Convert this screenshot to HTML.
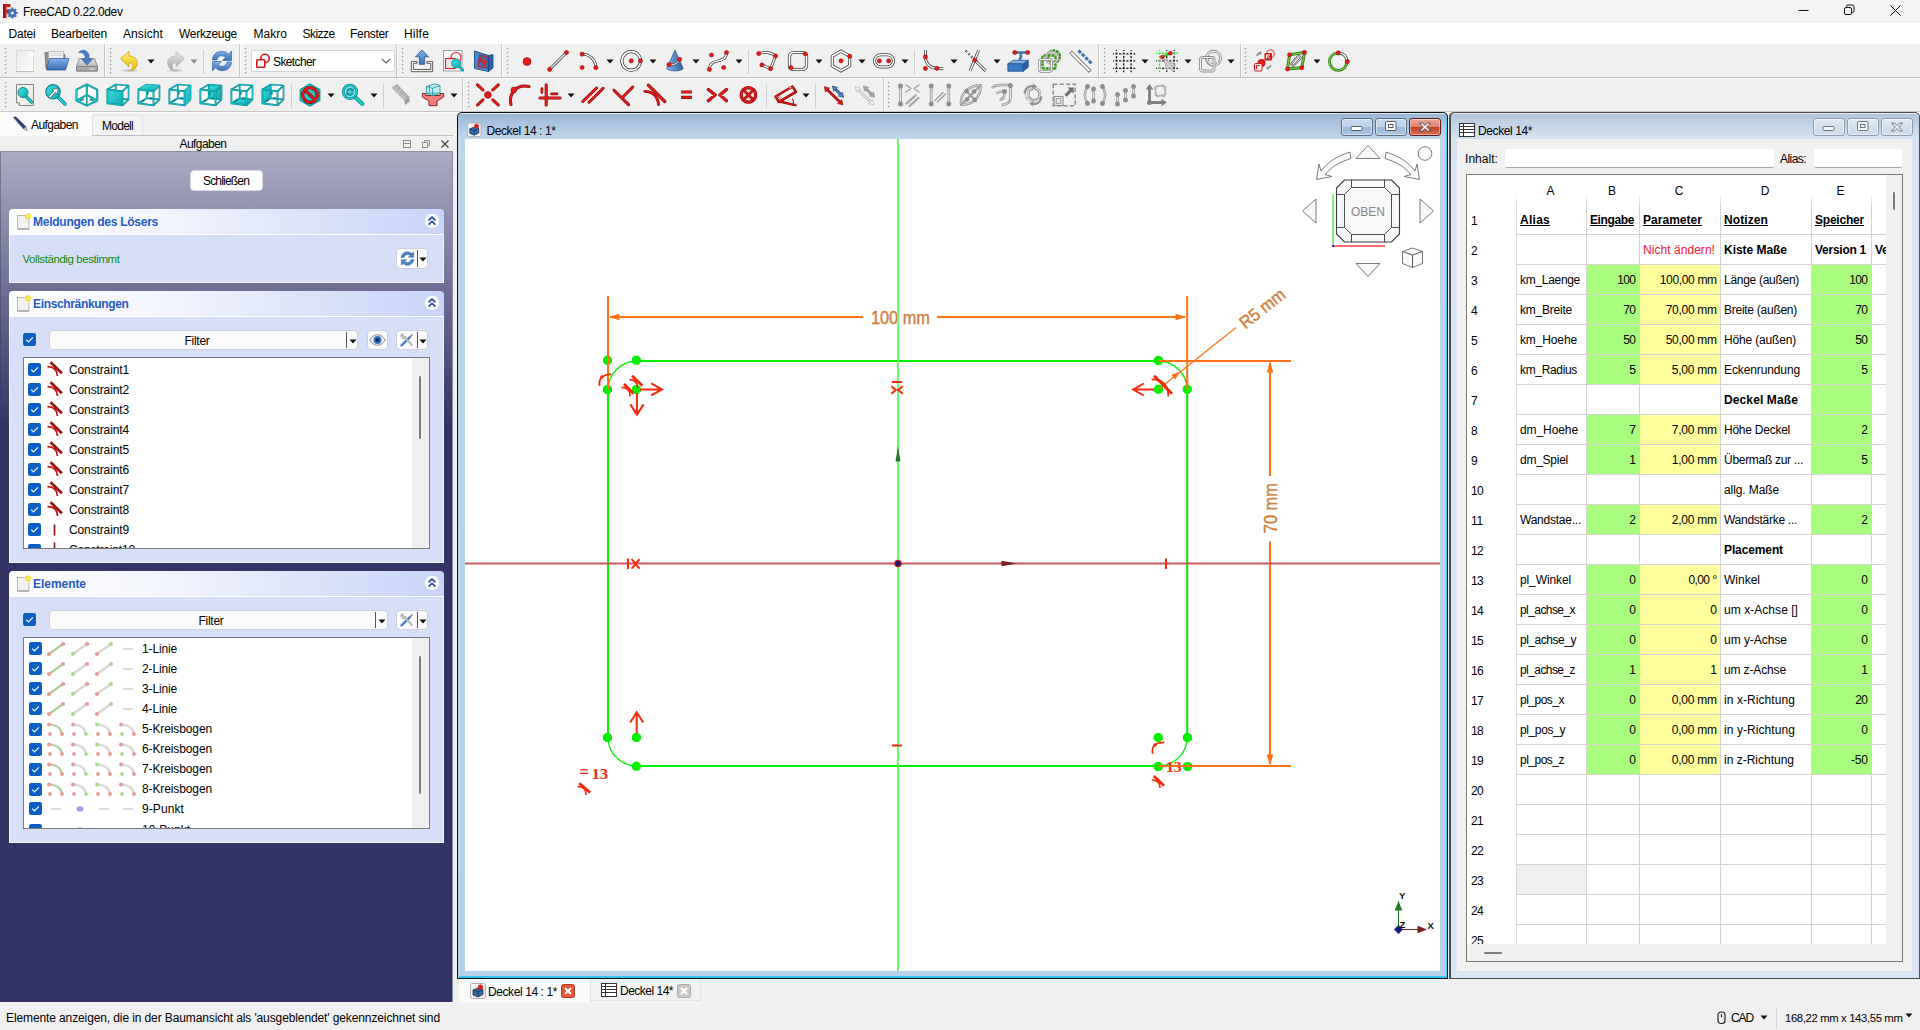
<!DOCTYPE html>
<html lang="de"><head><meta charset="utf-8"><title>FreeCAD 0.22.0dev</title>
<style>
html,body{margin:0;padding:0;}
body{width:1920px;height:1030px;overflow:hidden;position:relative;background:#f0f0f0;font-family:"Liberation Sans",sans-serif;font-size:12px;color:#000;}
div{position:absolute;box-sizing:border-box;}
svg{position:absolute;overflow:visible;}
.t{position:absolute;line-height:16px;height:16px;white-space:pre;}

</style></head>
<body>
<div style="left:0px;top:0px;width:1920px;height:23px;background:#f3f3f3;"></div>
<svg style="left:2px;top:3px" width="16" height="16" viewBox="0 0 16 16">
<path d="M1 1h7.5v3.2H4.6v2.4h3v3h-3V15H1z" fill="#cc1f1f"/>
<path d="M1 1h1.6v14H1z" fill="#8e1010"/>
<g fill="#3f6fb5"><circle cx="10.3" cy="10" r="4"/>
<g stroke="#3f6fb5" stroke-width="2.2" stroke-linecap="butt"><path d="M10.3 4.6v10.8M4.9 10h10.8M6.5 6.2l7.6 7.6M14.1 6.2l-7.6 7.6"/></g></g>
<circle cx="10.3" cy="10" r="1.6" fill="#f3f3f3"/></svg>
<span class="t " style="top:3.5px;font-size:12px;color:#000;letter-spacing:-0.386px;left:23.0px;">FreeCAD 0.22.0dev</span>
<svg style="left:1790px;top:0" width="130" height="23" viewBox="0 0 130 23">
<g stroke="#111" stroke-width="1" fill="none">
<path d="M8.5 10.5h10"/>
<rect x="54.500" y="7.500" width="7" height="7" rx="1.500"/><path d="M56.500 7.500v-1a1.500 1.500 0 0 1 1.500 -1.500h4.500a1.500 1.500 0 0 1 1.500 1.500v4.500a1.500 1.500 0 0 1 -1.500 1.500h-1"/>
<path d="M100.500 5.500l10 10M110.500 5.500l-10 10"/></g></svg>
<div style="left:0px;top:23px;width:1920px;height:21px;background:#fff;"></div>
<span class="t " style="top:25.5px;font-size:12px;color:#000;letter-spacing:-0.203px;left:8.5px;">Datei</span>
<span class="t " style="top:25.5px;font-size:12px;color:#000;letter-spacing:-0.205px;left:51.0px;">Bearbeiten</span>
<span class="t " style="top:25.5px;font-size:12px;color:#000;letter-spacing:0.093px;left:123.0px;">Ansicht</span>
<span class="t " style="top:25.5px;font-size:12px;color:#000;letter-spacing:-0.275px;left:179.0px;">Werkzeuge</span>
<span class="t " style="top:25.5px;font-size:12px;color:#000;letter-spacing:0.032px;left:253.5px;">Makro</span>
<span class="t " style="top:25.5px;font-size:12px;color:#000;letter-spacing:-0.557px;left:302.5px;">Skizze</span>
<span class="t " style="top:25.5px;font-size:12px;color:#000;letter-spacing:-0.312px;left:350.0px;">Fenster</span>
<span class="t " style="top:25.5px;font-size:12px;color:#000;letter-spacing:0.199px;left:404.0px;">Hilfe</span>
<div style="left:0px;top:44px;width:1920px;height:68px;background:#f0f0f0;"></div>
<div style="left:0px;top:77px;width:1920px;height:1px;background:#c0c0c0;"></div>
<div style="left:0px;top:78px;width:1920px;height:1px;background:#fafafa;"></div>
<div style="left:0px;top:111px;width:1920px;height:1px;background:#c6c6c6;"></div>
<div style="left:0px;top:112px;width:1920px;height:1px;background:#fafafa;"></div>
<svg style="left:3.5px;top:47px" width="3" height="28" viewBox="0 0 3 28"><rect x="0" y="0" width="1.400" height="1.400" fill="#ffffff"/><rect x="0.800" y="0.8" width="1.500" height="1.500" fill="#9e9e9e"/><rect x="0" y="4" width="1.400" height="1.400" fill="#ffffff"/><rect x="0.800" y="4.8" width="1.500" height="1.500" fill="#9e9e9e"/><rect x="0" y="8" width="1.400" height="1.400" fill="#ffffff"/><rect x="0.800" y="8.8" width="1.500" height="1.500" fill="#9e9e9e"/><rect x="0" y="12" width="1.400" height="1.400" fill="#ffffff"/><rect x="0.800" y="12.8" width="1.500" height="1.500" fill="#9e9e9e"/><rect x="0" y="16" width="1.400" height="1.400" fill="#ffffff"/><rect x="0.800" y="16.8" width="1.500" height="1.500" fill="#9e9e9e"/><rect x="0" y="20" width="1.400" height="1.400" fill="#ffffff"/><rect x="0.800" y="20.8" width="1.500" height="1.500" fill="#9e9e9e"/><rect x="0" y="24" width="1.400" height="1.400" fill="#ffffff"/><rect x="0.800" y="24.8" width="1.500" height="1.500" fill="#9e9e9e"/></svg>
<svg style="left:108.5px;top:47px" width="3" height="28" viewBox="0 0 3 28"><rect x="0" y="0" width="1.400" height="1.400" fill="#ffffff"/><rect x="0.800" y="0.8" width="1.500" height="1.500" fill="#9e9e9e"/><rect x="0" y="4" width="1.400" height="1.400" fill="#ffffff"/><rect x="0.800" y="4.8" width="1.500" height="1.500" fill="#9e9e9e"/><rect x="0" y="8" width="1.400" height="1.400" fill="#ffffff"/><rect x="0.800" y="8.8" width="1.500" height="1.500" fill="#9e9e9e"/><rect x="0" y="12" width="1.400" height="1.400" fill="#ffffff"/><rect x="0.800" y="12.8" width="1.500" height="1.500" fill="#9e9e9e"/><rect x="0" y="16" width="1.400" height="1.400" fill="#ffffff"/><rect x="0.800" y="16.8" width="1.500" height="1.500" fill="#9e9e9e"/><rect x="0" y="20" width="1.400" height="1.400" fill="#ffffff"/><rect x="0.800" y="20.8" width="1.500" height="1.500" fill="#9e9e9e"/><rect x="0" y="24" width="1.400" height="1.400" fill="#ffffff"/><rect x="0.800" y="24.8" width="1.500" height="1.500" fill="#9e9e9e"/></svg>
<svg style="left:243.5px;top:47px" width="3" height="28" viewBox="0 0 3 28"><rect x="0" y="0" width="1.400" height="1.400" fill="#ffffff"/><rect x="0.800" y="0.8" width="1.500" height="1.500" fill="#9e9e9e"/><rect x="0" y="4" width="1.400" height="1.400" fill="#ffffff"/><rect x="0.800" y="4.8" width="1.500" height="1.500" fill="#9e9e9e"/><rect x="0" y="8" width="1.400" height="1.400" fill="#ffffff"/><rect x="0.800" y="8.8" width="1.500" height="1.500" fill="#9e9e9e"/><rect x="0" y="12" width="1.400" height="1.400" fill="#ffffff"/><rect x="0.800" y="12.8" width="1.500" height="1.500" fill="#9e9e9e"/><rect x="0" y="16" width="1.400" height="1.400" fill="#ffffff"/><rect x="0.800" y="16.8" width="1.500" height="1.500" fill="#9e9e9e"/><rect x="0" y="20" width="1.400" height="1.400" fill="#ffffff"/><rect x="0.800" y="20.8" width="1.500" height="1.500" fill="#9e9e9e"/><rect x="0" y="24" width="1.400" height="1.400" fill="#ffffff"/><rect x="0.800" y="24.8" width="1.500" height="1.500" fill="#9e9e9e"/></svg>
<svg style="left:400.5px;top:47px" width="3" height="28" viewBox="0 0 3 28"><rect x="0" y="0" width="1.400" height="1.400" fill="#ffffff"/><rect x="0.800" y="0.8" width="1.500" height="1.500" fill="#9e9e9e"/><rect x="0" y="4" width="1.400" height="1.400" fill="#ffffff"/><rect x="0.800" y="4.8" width="1.500" height="1.500" fill="#9e9e9e"/><rect x="0" y="8" width="1.400" height="1.400" fill="#ffffff"/><rect x="0.800" y="8.8" width="1.500" height="1.500" fill="#9e9e9e"/><rect x="0" y="12" width="1.400" height="1.400" fill="#ffffff"/><rect x="0.800" y="12.8" width="1.500" height="1.500" fill="#9e9e9e"/><rect x="0" y="16" width="1.400" height="1.400" fill="#ffffff"/><rect x="0.800" y="16.8" width="1.500" height="1.500" fill="#9e9e9e"/><rect x="0" y="20" width="1.400" height="1.400" fill="#ffffff"/><rect x="0.800" y="20.8" width="1.500" height="1.500" fill="#9e9e9e"/><rect x="0" y="24" width="1.400" height="1.400" fill="#ffffff"/><rect x="0.800" y="24.8" width="1.500" height="1.500" fill="#9e9e9e"/></svg>
<svg style="left:505.5px;top:47px" width="3" height="28" viewBox="0 0 3 28"><rect x="0" y="0" width="1.400" height="1.400" fill="#ffffff"/><rect x="0.800" y="0.8" width="1.500" height="1.500" fill="#9e9e9e"/><rect x="0" y="4" width="1.400" height="1.400" fill="#ffffff"/><rect x="0.800" y="4.8" width="1.500" height="1.500" fill="#9e9e9e"/><rect x="0" y="8" width="1.400" height="1.400" fill="#ffffff"/><rect x="0.800" y="8.8" width="1.500" height="1.500" fill="#9e9e9e"/><rect x="0" y="12" width="1.400" height="1.400" fill="#ffffff"/><rect x="0.800" y="12.8" width="1.500" height="1.500" fill="#9e9e9e"/><rect x="0" y="16" width="1.400" height="1.400" fill="#ffffff"/><rect x="0.800" y="16.8" width="1.500" height="1.500" fill="#9e9e9e"/><rect x="0" y="20" width="1.400" height="1.400" fill="#ffffff"/><rect x="0.800" y="20.8" width="1.500" height="1.500" fill="#9e9e9e"/><rect x="0" y="24" width="1.400" height="1.400" fill="#ffffff"/><rect x="0.800" y="24.8" width="1.500" height="1.500" fill="#9e9e9e"/></svg>
<svg style="left:1102.5px;top:47px" width="3" height="28" viewBox="0 0 3 28"><rect x="0" y="0" width="1.400" height="1.400" fill="#ffffff"/><rect x="0.800" y="0.8" width="1.500" height="1.500" fill="#9e9e9e"/><rect x="0" y="4" width="1.400" height="1.400" fill="#ffffff"/><rect x="0.800" y="4.8" width="1.500" height="1.500" fill="#9e9e9e"/><rect x="0" y="8" width="1.400" height="1.400" fill="#ffffff"/><rect x="0.800" y="8.8" width="1.500" height="1.500" fill="#9e9e9e"/><rect x="0" y="12" width="1.400" height="1.400" fill="#ffffff"/><rect x="0.800" y="12.8" width="1.500" height="1.500" fill="#9e9e9e"/><rect x="0" y="16" width="1.400" height="1.400" fill="#ffffff"/><rect x="0.800" y="16.8" width="1.500" height="1.500" fill="#9e9e9e"/><rect x="0" y="20" width="1.400" height="1.400" fill="#ffffff"/><rect x="0.800" y="20.8" width="1.500" height="1.500" fill="#9e9e9e"/><rect x="0" y="24" width="1.400" height="1.400" fill="#ffffff"/><rect x="0.800" y="24.8" width="1.500" height="1.500" fill="#9e9e9e"/></svg>
<svg style="left:1243.5px;top:47px" width="3" height="28" viewBox="0 0 3 28"><rect x="0" y="0" width="1.400" height="1.400" fill="#ffffff"/><rect x="0.800" y="0.8" width="1.500" height="1.500" fill="#9e9e9e"/><rect x="0" y="4" width="1.400" height="1.400" fill="#ffffff"/><rect x="0.800" y="4.8" width="1.500" height="1.500" fill="#9e9e9e"/><rect x="0" y="8" width="1.400" height="1.400" fill="#ffffff"/><rect x="0.800" y="8.8" width="1.500" height="1.500" fill="#9e9e9e"/><rect x="0" y="12" width="1.400" height="1.400" fill="#ffffff"/><rect x="0.800" y="12.8" width="1.500" height="1.500" fill="#9e9e9e"/><rect x="0" y="16" width="1.400" height="1.400" fill="#ffffff"/><rect x="0.800" y="16.8" width="1.500" height="1.500" fill="#9e9e9e"/><rect x="0" y="20" width="1.400" height="1.400" fill="#ffffff"/><rect x="0.800" y="20.8" width="1.500" height="1.500" fill="#9e9e9e"/><rect x="0" y="24" width="1.400" height="1.400" fill="#ffffff"/><rect x="0.800" y="24.8" width="1.500" height="1.500" fill="#9e9e9e"/></svg>
<svg style="left:3.5px;top:81px" width="3" height="28" viewBox="0 0 3 28"><rect x="0" y="0" width="1.400" height="1.400" fill="#ffffff"/><rect x="0.800" y="0.8" width="1.500" height="1.500" fill="#9e9e9e"/><rect x="0" y="4" width="1.400" height="1.400" fill="#ffffff"/><rect x="0.800" y="4.8" width="1.500" height="1.500" fill="#9e9e9e"/><rect x="0" y="8" width="1.400" height="1.400" fill="#ffffff"/><rect x="0.800" y="8.8" width="1.500" height="1.500" fill="#9e9e9e"/><rect x="0" y="12" width="1.400" height="1.400" fill="#ffffff"/><rect x="0.800" y="12.8" width="1.500" height="1.500" fill="#9e9e9e"/><rect x="0" y="16" width="1.400" height="1.400" fill="#ffffff"/><rect x="0.800" y="16.8" width="1.500" height="1.500" fill="#9e9e9e"/><rect x="0" y="20" width="1.400" height="1.400" fill="#ffffff"/><rect x="0.800" y="20.8" width="1.500" height="1.500" fill="#9e9e9e"/><rect x="0" y="24" width="1.400" height="1.400" fill="#ffffff"/><rect x="0.800" y="24.8" width="1.500" height="1.500" fill="#9e9e9e"/></svg>
<svg style="left:466.5px;top:81px" width="3" height="28" viewBox="0 0 3 28"><rect x="0" y="0" width="1.400" height="1.400" fill="#ffffff"/><rect x="0.800" y="0.8" width="1.500" height="1.500" fill="#9e9e9e"/><rect x="0" y="4" width="1.400" height="1.400" fill="#ffffff"/><rect x="0.800" y="4.8" width="1.500" height="1.500" fill="#9e9e9e"/><rect x="0" y="8" width="1.400" height="1.400" fill="#ffffff"/><rect x="0.800" y="8.8" width="1.500" height="1.500" fill="#9e9e9e"/><rect x="0" y="12" width="1.400" height="1.400" fill="#ffffff"/><rect x="0.800" y="12.8" width="1.500" height="1.500" fill="#9e9e9e"/><rect x="0" y="16" width="1.400" height="1.400" fill="#ffffff"/><rect x="0.800" y="16.8" width="1.500" height="1.500" fill="#9e9e9e"/><rect x="0" y="20" width="1.400" height="1.400" fill="#ffffff"/><rect x="0.800" y="20.8" width="1.500" height="1.500" fill="#9e9e9e"/><rect x="0" y="24" width="1.400" height="1.400" fill="#ffffff"/><rect x="0.800" y="24.8" width="1.500" height="1.500" fill="#9e9e9e"/></svg>
<svg style="left:886.5px;top:81px" width="3" height="28" viewBox="0 0 3 28"><rect x="0" y="0" width="1.400" height="1.400" fill="#ffffff"/><rect x="0.800" y="0.8" width="1.500" height="1.500" fill="#9e9e9e"/><rect x="0" y="4" width="1.400" height="1.400" fill="#ffffff"/><rect x="0.800" y="4.8" width="1.500" height="1.500" fill="#9e9e9e"/><rect x="0" y="8" width="1.400" height="1.400" fill="#ffffff"/><rect x="0.800" y="8.8" width="1.500" height="1.500" fill="#9e9e9e"/><rect x="0" y="12" width="1.400" height="1.400" fill="#ffffff"/><rect x="0.800" y="12.8" width="1.500" height="1.500" fill="#9e9e9e"/><rect x="0" y="16" width="1.400" height="1.400" fill="#ffffff"/><rect x="0.800" y="16.8" width="1.500" height="1.500" fill="#9e9e9e"/><rect x="0" y="20" width="1.400" height="1.400" fill="#ffffff"/><rect x="0.800" y="20.8" width="1.500" height="1.500" fill="#9e9e9e"/><rect x="0" y="24" width="1.400" height="1.400" fill="#ffffff"/><rect x="0.800" y="24.8" width="1.500" height="1.500" fill="#9e9e9e"/></svg>
<div style="left:104px;top:44px;width:1px;height:33px;background:#c6c6c6;"></div><div style="left:105px;top:44px;width:1px;height:33px;background:#fbfbfb;"></div>
<div style="left:239px;top:44px;width:1px;height:33px;background:#c6c6c6;"></div><div style="left:240px;top:44px;width:1px;height:33px;background:#fbfbfb;"></div>
<div style="left:396px;top:44px;width:1px;height:33px;background:#c6c6c6;"></div><div style="left:397px;top:44px;width:1px;height:33px;background:#fbfbfb;"></div>
<div style="left:501px;top:44px;width:1px;height:33px;background:#c6c6c6;"></div><div style="left:502px;top:44px;width:1px;height:33px;background:#fbfbfb;"></div>
<div style="left:1098px;top:44px;width:1px;height:33px;background:#c6c6c6;"></div><div style="left:1099px;top:44px;width:1px;height:33px;background:#fbfbfb;"></div>
<div style="left:1240px;top:44px;width:1px;height:33px;background:#c6c6c6;"></div><div style="left:1241px;top:44px;width:1px;height:33px;background:#fbfbfb;"></div>
<div style="left:462px;top:78px;width:1px;height:33px;background:#c6c6c6;"></div><div style="left:463px;top:78px;width:1px;height:33px;background:#fbfbfb;"></div>
<div style="left:883px;top:78px;width:1px;height:33px;background:#c6c6c6;"></div><div style="left:884px;top:78px;width:1px;height:33px;background:#fbfbfb;"></div>
<div style="left:203px;top:50px;width:1px;height:24px;background:#cfcfcf;"></div>
<div style="left:748px;top:50px;width:1px;height:24px;background:#cfcfcf;"></div>
<div style="left:914px;top:50px;width:1px;height:24px;background:#cfcfcf;"></div>
<div style="left:291px;top:84px;width:1px;height:24px;background:#cfcfcf;"></div>
<div style="left:383px;top:84px;width:1px;height:24px;background:#cfcfcf;"></div>
<div style="left:766px;top:84px;width:1px;height:24px;background:#cfcfcf;"></div>
<div style="left:815px;top:84px;width:1px;height:24px;background:#cfcfcf;"></div>
<svg style="left:147px;top:59px" width="8" height="5" viewBox="0 0 8 5"><path d="M0.5 0.5h7L4 4.5z" fill="#111"/></svg>
<svg style="left:606px;top:59px" width="8" height="5" viewBox="0 0 8 5"><path d="M0.5 0.5h7L4 4.5z" fill="#111"/></svg>
<svg style="left:649px;top:59px" width="8" height="5" viewBox="0 0 8 5"><path d="M0.5 0.5h7L4 4.5z" fill="#111"/></svg>
<svg style="left:692px;top:59px" width="8" height="5" viewBox="0 0 8 5"><path d="M0.5 0.5h7L4 4.5z" fill="#111"/></svg>
<svg style="left:735px;top:59px" width="8" height="5" viewBox="0 0 8 5"><path d="M0.5 0.5h7L4 4.5z" fill="#111"/></svg>
<svg style="left:815px;top:59px" width="8" height="5" viewBox="0 0 8 5"><path d="M0.5 0.5h7L4 4.5z" fill="#111"/></svg>
<svg style="left:858px;top:59px" width="8" height="5" viewBox="0 0 8 5"><path d="M0.5 0.5h7L4 4.5z" fill="#111"/></svg>
<svg style="left:901px;top:59px" width="8" height="5" viewBox="0 0 8 5"><path d="M0.5 0.5h7L4 4.5z" fill="#111"/></svg>
<svg style="left:950px;top:59px" width="8" height="5" viewBox="0 0 8 5"><path d="M0.5 0.5h7L4 4.5z" fill="#111"/></svg>
<svg style="left:993px;top:59px" width="8" height="5" viewBox="0 0 8 5"><path d="M0.5 0.5h7L4 4.5z" fill="#111"/></svg>
<svg style="left:1141px;top:59px" width="8" height="5" viewBox="0 0 8 5"><path d="M0.5 0.5h7L4 4.5z" fill="#111"/></svg>
<svg style="left:1184px;top:59px" width="8" height="5" viewBox="0 0 8 5"><path d="M0.5 0.5h7L4 4.5z" fill="#111"/></svg>
<svg style="left:1227px;top:59px" width="8" height="5" viewBox="0 0 8 5"><path d="M0.5 0.5h7L4 4.5z" fill="#111"/></svg>
<svg style="left:1313px;top:59px" width="8" height="5" viewBox="0 0 8 5"><path d="M0.5 0.5h7L4 4.5z" fill="#111"/></svg>
<svg style="left:190px;top:59px" width="8" height="5" viewBox="0 0 8 5"><path d="M0.5 0.5h7L4 4.5z" fill="#8a8a8a"/></svg>
<svg style="left:327px;top:93px" width="8" height="5" viewBox="0 0 8 5"><path d="M0.5 0.5h7L4 4.5z" fill="#111"/></svg>
<svg style="left:370px;top:93px" width="8" height="5" viewBox="0 0 8 5"><path d="M0.5 0.5h7L4 4.5z" fill="#111"/></svg>
<svg style="left:450px;top:93px" width="8" height="5" viewBox="0 0 8 5"><path d="M0.5 0.5h7L4 4.5z" fill="#111"/></svg>
<svg style="left:567px;top:93px" width="8" height="5" viewBox="0 0 8 5"><path d="M0.5 0.5h7L4 4.5z" fill="#111"/></svg>
<svg style="left:802px;top:93px" width="8" height="5" viewBox="0 0 8 5"><path d="M0.5 0.5h7L4 4.5z" fill="#111"/></svg>
<div style="left:251px;top:50px;width:144px;height:22px;background:#fff;border:1px solid #d4d4d4;border-radius:2px;"></div>
<svg style="left:255px;top:53px" width="16" height="16" viewBox="0 0 16 16"><circle cx="10" cy="5.500" r="4.200" fill="none" stroke="#d01818" stroke-width="1.600"/><rect x="1.800" y="6.800" width="8" height="7.400" rx="0.800" fill="#fff" stroke="#d01818" stroke-width="1.600"/></svg>
<span class="t " style="top:53.5px;font-size:12px;color:#000;letter-spacing:-0.607px;left:273.0px;">Sketcher</span>
<svg style="left:381px;top:58px" width="10" height="6" viewBox="0 0 10 6"><path d="M0.800 0.800L5 5l4.200 -4.200" fill="none" stroke="#555" stroke-width="1.100"/></svg>
<div style="left:0px;top:113px;width:93px;height:23px;background:#fbfbfb;"></div>
<div style="left:92px;top:115px;width:51px;height:21px;background:#f3f3f3;border:1px solid #e2e2e2;border-bottom:none;"></div>
<div style="left:92px;top:135px;width:361px;height:1px;background:#bdbdbd;"></div>
<svg style="left:11px;top:116px" width="18" height="16" viewBox="0 0 18 16"><path d="M2.200 1.200L4.800 0.400 15 10.500 12.500 13z" fill="#2c3e66"/><path d="M12.500 13L15 10.500 16.200 14.600z" fill="#c8c8c8" stroke="#555" stroke-width="0.500"/><path d="M2.200 1.200L12.500 13" stroke="#5a78b0" stroke-width="0.800"/></svg>
<span class="t " style="top:117.0px;font-size:12px;color:#000;letter-spacing:-0.548px;left:31.0px;">Aufgaben</span>
<span class="t " style="top:117.5px;font-size:12px;color:#000;letter-spacing:-0.725px;left:102.0px;">Modell</span>
<span class="t " style="top:136.0px;font-size:12px;color:#000;letter-spacing:-0.548px;left:3.0px;width:400px;text-align:center;">Aufgaben</span>
<svg style="left:402px;top:138px" width="50" height="12" viewBox="0 0 50 12"><g fill="none" stroke="#8c8c8c" stroke-width="1"><rect x="1.500" y="2.500" width="7" height="7"/><path d="M1.500 5.500h7"/><rect x="20.500" y="4.500" width="5" height="5"/><path d="M22.500 4.500v-2h5v5h-2"/></g><path d="M39.500 2.500l7 7M46.500 2.500l-7 7" stroke="#444" stroke-width="1.200"/></svg>
<span class="t " style="top:1009.5px;font-size:12px;color:#000;letter-spacing:-0.111px;left:6.0px;">Elemente anzeigen, die in der Baumansicht als &#x27;ausgeblendet&#x27; gekennzeichnet sind</span>
<svg style="left:1717px;top:1011px" width="10" height="14" viewBox="0 0 10 14"><rect x="1" y="1" width="7" height="11.500" rx="3" fill="none" stroke="#222" stroke-width="1.200"/><path d="M4.500 3.200v3" stroke="#222" stroke-width="1.200"/></svg>
<span class="t " style="top:1010.0px;font-size:12px;color:#000;letter-spacing:-1.112px;left:1731.0px;">CAD</span>
<svg style="left:1760px;top:1015px" width="8" height="5" viewBox="0 0 8 5"><path d="M0.5 0.5h7L4 4.5z" fill="#111"/></svg>
<div style="left:1776px;top:1007px;width:1px;height:22px;background:#d6d6d6;"></div>
<span class="t " style="top:1009.5px;font-size:11.3px;color:#000;letter-spacing:-0.357px;left:1785.0px;">168,22 mm x 143,55 mm</span>
<svg style="left:1904.5px;top:1013px" width="8" height="5" viewBox="0 0 8 5"><path d="M0.5 0.5h7L4 4.5z" fill="#111"/></svg>
<div style="left:459px;top:979px;width:132px;height:24px;background:#fafafa;border-right:1px solid #e0e0e0;"></div>
<div style="left:591px;top:979px;width:110px;height:22px;background:#f2f2f2;border-right:1px solid #e2e2e2;border-bottom:1px solid #e2e2e2;"></div>
<svg style="left:470px;top:983px" width="16" height="16" viewBox="0 0 16 16"><rect x="0.500" y="0.500" width="15" height="15" rx="2" fill="#f4f4f4" stroke="#b0b0b0"/><path d="M3 7l5 -2 5 1.500v5l-5 2.500 -5 -2z" fill="#3465a4" stroke="#1d3557" stroke-width="0.800"/><path d="M3 7l5 2 5 -2.500M8 9v5" stroke="#1d3557" stroke-width="0.700" fill="none"/><circle cx="10.500" cy="4" r="2.600" fill="#e02020"/></svg>
<span class="t " style="top:983.5px;font-size:12px;color:#000;letter-spacing:-0.408px;left:488.0px;">Deckel 14 : 1*</span>
<svg style="left:561px;top:984px" width="14" height="14" viewBox="0 0 14 14"><rect x="0.500" y="0.500" width="13" height="13" rx="2" fill="#e8553c" stroke="#b83a26"/><path d="M4 4l6 6M10 4l-6 6" stroke="#fff" stroke-width="2"/></svg>
<svg style="left:601px;top:983px" width="16" height="14" viewBox="0 0 16 14"><rect x="0.500" y="0.500" width="15" height="13" fill="#fff" stroke="#333"/><path d="M0.500 3.5h15" stroke="#333" stroke-width="1"/><path d="M0.500 6.5h15" stroke="#333" stroke-width="1"/><path d="M0.500 9.5h15" stroke="#333" stroke-width="1"/><path d="M4.500 0.500v13" stroke="#333" stroke-width="1"/></svg>
<span class="t " style="top:983.0px;font-size:12px;color:#000;letter-spacing:-0.503px;left:620.0px;">Deckel 14*</span>
<svg style="left:677px;top:984px" width="14" height="14" viewBox="0 0 14 14"><rect x="0.500" y="0.500" width="13" height="13" rx="2" fill="#c9c9c9" stroke="#aaa"/><path d="M4 4l6 6M10 4l-6 6" stroke="#fff" stroke-width="2"/></svg>
<div style="left:0px;top:151px;width:453px;height:851px;background:linear-gradient(180deg,#ababc5 0px,#333366 272px,#333366 100%);border-top:1px solid #8a93a2;border-right:1px solid #8a8aa2;"></div>
<div style="left:0px;top:152px;width:1px;height:850px;background:linear-gradient(180deg,#7c7c94 0px,#333366 272px,#333366 100%);"></div>
<div style="left:453px;top:136px;width:5px;height:866px;background:#f0f0f0;"></div>
<div style="left:190px;top:170px;width:73px;height:21px;background:#fdfdfd;border:1px solid #d9d9e6;border-radius:4px;"></div>
<span class="t " style="top:172.5px;font-size:12px;color:#000;letter-spacing:-0.818px;left:26.0px;width:400px;text-align:center;">Schließen</span>
<div style="left:9px;top:209px;width:435px;height:25px;background:linear-gradient(90deg,#ffffff 0%,#f3f5fd 35%,#c8d4f8 100%);border-radius:4px 4px 0 0;"></div>
<div style="left:9px;top:234px;width:435px;height:49px;background:#d6dff7;border:1px solid #f4f6fd;border-top:1px solid #fff;"></div>
<svg style="left:17px;top:213px" width="15" height="17" viewBox="0 0 15 17"><rect x="0.500" y="2.500" width="11.500" height="13.500" fill="#f2f2f0" stroke="#b9b9b9"/><path d="M0.500 16h11.500" stroke="#8f8f8f"/><circle cx="11" cy="3.300" r="2.600" fill="#ffe94a" stroke="#e6c800" stroke-width="0.600"/></svg>
<span class="t " style="top:213.5px;font-size:12px;color:#2459c9;font-weight:700;letter-spacing:-0.251px;left:33.0px;">Meldungen des Lösers</span>
<svg style="left:423px;top:212px" width="18" height="18" viewBox="0 0 18 18"><circle cx="9" cy="9" r="7.700" fill="#fdfdff" stroke="#c9d2ee" stroke-width="1"/><path d="M5.600 8.400L9 5.100l3.400 3.300M5.600 12.600L9 9.300l3.400 3.300" fill="none" stroke="#1c3f9e" stroke-width="1.500"/></svg>
<div style="left:9px;top:291px;width:435px;height:25px;background:linear-gradient(90deg,#ffffff 0%,#f3f5fd 35%,#c8d4f8 100%);border-radius:4px 4px 0 0;"></div>
<div style="left:9px;top:316px;width:435px;height:247px;background:#d6dff7;border:1px solid #f4f6fd;border-top:1px solid #fff;"></div>
<svg style="left:17px;top:295px" width="15" height="17" viewBox="0 0 15 17"><rect x="0.500" y="2.500" width="11.500" height="13.500" fill="#f2f2f0" stroke="#b9b9b9"/><path d="M0.500 16h11.500" stroke="#8f8f8f"/><circle cx="11" cy="3.300" r="2.600" fill="#ffe94a" stroke="#e6c800" stroke-width="0.600"/></svg>
<span class="t " style="top:295.5px;font-size:12px;color:#2459c9;font-weight:700;letter-spacing:-0.346px;left:33.0px;">Einschränkungen</span>
<svg style="left:423px;top:294px" width="18" height="18" viewBox="0 0 18 18"><circle cx="9" cy="9" r="7.700" fill="#fdfdff" stroke="#c9d2ee" stroke-width="1"/><path d="M5.600 8.400L9 5.100l3.400 3.300M5.600 12.600L9 9.300l3.400 3.300" fill="none" stroke="#1c3f9e" stroke-width="1.500"/></svg>
<div style="left:9px;top:571px;width:435px;height:25px;background:linear-gradient(90deg,#ffffff 0%,#f3f5fd 35%,#c8d4f8 100%);border-radius:4px 4px 0 0;"></div>
<div style="left:9px;top:596px;width:435px;height:247px;background:#d6dff7;border:1px solid #f4f6fd;border-top:1px solid #fff;"></div>
<svg style="left:17px;top:575px" width="15" height="17" viewBox="0 0 15 17"><rect x="0.500" y="2.500" width="11.500" height="13.500" fill="#f2f2f0" stroke="#b9b9b9"/><path d="M0.500 16h11.500" stroke="#8f8f8f"/><circle cx="11" cy="3.300" r="2.600" fill="#ffe94a" stroke="#e6c800" stroke-width="0.600"/></svg>
<span class="t " style="top:575.5px;font-size:12px;color:#2459c9;font-weight:700;letter-spacing:-0.045px;left:33.0px;">Elemente</span>
<svg style="left:423px;top:574px" width="18" height="18" viewBox="0 0 18 18"><circle cx="9" cy="9" r="7.700" fill="#fdfdff" stroke="#c9d2ee" stroke-width="1"/><path d="M5.600 8.400L9 5.100l3.400 3.300M5.600 12.600L9 9.300l3.400 3.300" fill="none" stroke="#1c3f9e" stroke-width="1.500"/></svg>
<span class="t " style="top:251.0px;font-size:11.5px;color:#138a13;letter-spacing:-0.423px;left:22.5px;">Vollständig bestimmt</span>
<div style="left:396px;top:248px;width:32px;height:21px;background:#fcfcfc;border:1px solid #d0d0d8;border-radius:4px;"></div>
<svg style="left:399px;top:250px" width="17" height="17" viewBox="0 0 16 16"><g fill="#4f86c9" stroke="#2c5f9e" stroke-width="0.500"><path d="M2 7a6 6 0 0 1 10.200 -3.600l1.600 -1.600v5h-5l1.700 -1.700a3.600 3.600 0 0 0 -5.900 1.900z"/><path d="M14 9a6 6 0 0 1 -10.200 3.600l-1.600 1.600v-5h5l-1.700 1.700a3.600 3.600 0 0 0 5.900 -1.900z"/></g></svg>
<div style="left:417px;top:250px;width:1px;height:17px;background:#555;"></div>
<svg style="left:419px;top:256.5px" width="8" height="5" viewBox="0 0 8 5"><path d="M0.5 0.5h7L4 4.5z" fill="#111"/></svg>
<svg style="left:23px;top:333px" width="13" height="13" viewBox="0 0 13 13"><rect x="0" y="0" width="13" height="13" rx="2.200" fill="#0a5fc4"/><path d="M3.200 6.700l2.300 2.300 4.400 -4.600" fill="none" stroke="#fff" stroke-width="1.100"/></svg>
<div style="left:49px;top:330px;width:309px;height:20px;background:#fcfcfc;border:1px solid #d0d0d8;border-radius:4px;"></div>
<span class="t " style="top:332.5px;font-size:12px;color:#000;letter-spacing:-0.278px;left:-3.0px;width:400px;text-align:center;">Filter</span>
<div style="left:346px;top:332px;width:1px;height:16px;background:#555;"></div>
<svg style="left:348.5px;top:338.5px" width="8" height="5" viewBox="0 0 8 5"><path d="M0.5 0.5h7L4 4.5z" fill="#111"/></svg>
<div style="left:367px;top:330px;width:21px;height:20px;background:#fcfcfc;border:1px solid #d0d0d8;border-radius:4px;"></div>
<svg style="left:369px;top:333px" width="17" height="14" viewBox="0 0 17 14"><path d="M0.800 7C3 3 6 1.800 8.500 1.800S14 3 16.200 7C14 11 11 12.200 8.500 12.200S3 11 0.800 7z" fill="#e9eef6" stroke="#70788c" stroke-width="0.900"/><circle cx="8.500" cy="7" r="4" fill="#3b74bd"/><circle cx="8.500" cy="7" r="2" fill="#0f2a55"/></svg>
<div style="left:396px;top:330px;width:32px;height:20px;background:#fcfcfc;border:1px solid #d0d0d8;border-radius:4px;"></div>
<svg style="left:399px;top:332px" width="16" height="16" viewBox="0 0 16 16"><path d="M2.500 13.500L11 5" stroke="#3f78c2" stroke-width="2.400" stroke-linecap="round"/><path d="M10.500 5.500l3 -3" stroke="#8e8e8e" stroke-width="1.600"/><path d="M3 3l10 10" stroke="#b9b9b9" stroke-width="2" stroke-linecap="round"/><path d="M1.500 4.500a3 3 0 0 1 3 -3l-1 2 1.500 1.500 2 -1a3 3 0 0 1 -3 3z" fill="#c9c9c9" stroke="#999" stroke-width="0.500"/></svg>
<div style="left:417px;top:332px;width:1px;height:16px;background:#555;"></div>
<svg style="left:419px;top:338.5px" width="8" height="5" viewBox="0 0 8 5"><path d="M0.5 0.5h7L4 4.5z" fill="#111"/></svg>
<svg style="left:23px;top:613px" width="13" height="13" viewBox="0 0 13 13"><rect x="0" y="0" width="13" height="13" rx="2.200" fill="#0a5fc4"/><path d="M3.200 6.700l2.300 2.300 4.400 -4.600" fill="none" stroke="#fff" stroke-width="1.100"/></svg>
<div style="left:49px;top:610px;width:339px;height:20px;background:#fcfcfc;border:1px solid #d0d0d8;border-radius:4px;"></div>
<span class="t " style="top:612.5px;font-size:12px;color:#000;letter-spacing:-0.278px;left:11.0px;width:400px;text-align:center;">Filter</span>
<div style="left:375px;top:612px;width:1px;height:16px;background:#555;"></div>
<svg style="left:377.5px;top:618.5px" width="8" height="5" viewBox="0 0 8 5"><path d="M0.5 0.5h7L4 4.5z" fill="#111"/></svg>
<div style="left:396px;top:610px;width:32px;height:20px;background:#fcfcfc;border:1px solid #d0d0d8;border-radius:4px;"></div>
<svg style="left:399px;top:612px" width="16" height="16" viewBox="0 0 16 16"><path d="M2.500 13.500L11 5" stroke="#3f78c2" stroke-width="2.400" stroke-linecap="round"/><path d="M10.500 5.500l3 -3" stroke="#8e8e8e" stroke-width="1.600"/><path d="M3 3l10 10" stroke="#b9b9b9" stroke-width="2" stroke-linecap="round"/><path d="M1.500 4.500a3 3 0 0 1 3 -3l-1 2 1.500 1.500 2 -1a3 3 0 0 1 -3 3z" fill="#c9c9c9" stroke="#999" stroke-width="0.500"/></svg>
<div style="left:417px;top:612px;width:1px;height:16px;background:#555;"></div>
<svg style="left:419px;top:618.5px" width="8" height="5" viewBox="0 0 8 5"><path d="M0.5 0.5h7L4 4.5z" fill="#111"/></svg>
<div style="left:23px;top:357px;width:407px;height:192px;background:#fff;border:1px solid #7a7a7a;overflow:hidden;"></div>
<div style="left:412px;top:358px;width:17px;height:190px;background:#f0f0f0;"></div>
<div style="left:23px;top:637px;width:407px;height:192px;background:#fff;border:1px solid #7a7a7a;overflow:hidden;"></div>
<div style="left:412px;top:638px;width:17px;height:190px;background:#f0f0f0;"></div>
<div style="left:419px;top:376px;width:2px;height:63px;background:#7f7f7f;border-radius:1px;"></div>
<div style="left:419px;top:656px;width:2px;height:138px;background:#7f7f7f;border-radius:1px;"></div>
<svg style="left:28px;top:363.0px" width="13" height="13" viewBox="0 0 13 13"><rect x="0" y="0" width="13" height="13" rx="2.200" fill="#0a5fc4"/><path d="M3.200 6.700l2.300 2.300 4.400 -4.600" fill="none" stroke="#fff" stroke-width="1.100"/></svg>
<svg style="left:47px;top:361.0px" width="16" height="16" viewBox="0 0 16 16"><path d="M0.500 5.600Q10 5.600 10.500 15" fill="none" stroke="#c81414" stroke-width="1.700"/><path d="M3.600 1.250L14.900 12.200" stroke="#8f0a0a" stroke-width="2.600"/><path d="M3.600 1.250L14.900 12.200" stroke="#e23030" stroke-width="0.800" stroke-dasharray="0.800 0.800"/></svg>
<span class="t " style="top:361.5px;font-size:12px;color:#000;letter-spacing:-0.124px;left:69.0px;">Constraint1</span>
<svg style="left:28px;top:383.0px" width="13" height="13" viewBox="0 0 13 13"><rect x="0" y="0" width="13" height="13" rx="2.200" fill="#0a5fc4"/><path d="M3.200 6.700l2.300 2.300 4.400 -4.600" fill="none" stroke="#fff" stroke-width="1.100"/></svg>
<svg style="left:47px;top:381.0px" width="16" height="16" viewBox="0 0 16 16"><path d="M0.500 5.600Q10 5.600 10.500 15" fill="none" stroke="#c81414" stroke-width="1.700"/><path d="M3.600 1.250L14.900 12.200" stroke="#8f0a0a" stroke-width="2.600"/><path d="M3.600 1.250L14.900 12.200" stroke="#e23030" stroke-width="0.800" stroke-dasharray="0.800 0.800"/></svg>
<span class="t " style="top:381.5px;font-size:12px;color:#000;letter-spacing:-0.124px;left:69.0px;">Constraint2</span>
<svg style="left:28px;top:403.0px" width="13" height="13" viewBox="0 0 13 13"><rect x="0" y="0" width="13" height="13" rx="2.200" fill="#0a5fc4"/><path d="M3.200 6.700l2.300 2.300 4.400 -4.600" fill="none" stroke="#fff" stroke-width="1.100"/></svg>
<svg style="left:47px;top:401.0px" width="16" height="16" viewBox="0 0 16 16"><path d="M0.500 5.600Q10 5.600 10.500 15" fill="none" stroke="#c81414" stroke-width="1.700"/><path d="M3.600 1.250L14.900 12.200" stroke="#8f0a0a" stroke-width="2.600"/><path d="M3.600 1.250L14.900 12.200" stroke="#e23030" stroke-width="0.800" stroke-dasharray="0.800 0.800"/></svg>
<span class="t " style="top:401.5px;font-size:12px;color:#000;letter-spacing:-0.124px;left:69.0px;">Constraint3</span>
<svg style="left:28px;top:423.0px" width="13" height="13" viewBox="0 0 13 13"><rect x="0" y="0" width="13" height="13" rx="2.200" fill="#0a5fc4"/><path d="M3.200 6.700l2.300 2.300 4.400 -4.600" fill="none" stroke="#fff" stroke-width="1.100"/></svg>
<svg style="left:47px;top:421.0px" width="16" height="16" viewBox="0 0 16 16"><path d="M0.500 5.600Q10 5.600 10.500 15" fill="none" stroke="#c81414" stroke-width="1.700"/><path d="M3.600 1.250L14.900 12.200" stroke="#8f0a0a" stroke-width="2.600"/><path d="M3.600 1.250L14.900 12.200" stroke="#e23030" stroke-width="0.800" stroke-dasharray="0.800 0.800"/></svg>
<span class="t " style="top:421.5px;font-size:12px;color:#000;letter-spacing:-0.124px;left:69.0px;">Constraint4</span>
<svg style="left:28px;top:443.0px" width="13" height="13" viewBox="0 0 13 13"><rect x="0" y="0" width="13" height="13" rx="2.200" fill="#0a5fc4"/><path d="M3.200 6.700l2.300 2.300 4.400 -4.600" fill="none" stroke="#fff" stroke-width="1.100"/></svg>
<svg style="left:47px;top:441.0px" width="16" height="16" viewBox="0 0 16 16"><path d="M0.500 5.600Q10 5.600 10.500 15" fill="none" stroke="#c81414" stroke-width="1.700"/><path d="M3.600 1.250L14.900 12.200" stroke="#8f0a0a" stroke-width="2.600"/><path d="M3.600 1.250L14.900 12.200" stroke="#e23030" stroke-width="0.800" stroke-dasharray="0.800 0.800"/></svg>
<span class="t " style="top:441.5px;font-size:12px;color:#000;letter-spacing:-0.124px;left:69.0px;">Constraint5</span>
<svg style="left:28px;top:463.0px" width="13" height="13" viewBox="0 0 13 13"><rect x="0" y="0" width="13" height="13" rx="2.200" fill="#0a5fc4"/><path d="M3.200 6.700l2.300 2.300 4.400 -4.600" fill="none" stroke="#fff" stroke-width="1.100"/></svg>
<svg style="left:47px;top:461.0px" width="16" height="16" viewBox="0 0 16 16"><path d="M0.500 5.600Q10 5.600 10.500 15" fill="none" stroke="#c81414" stroke-width="1.700"/><path d="M3.600 1.250L14.900 12.200" stroke="#8f0a0a" stroke-width="2.600"/><path d="M3.600 1.250L14.900 12.200" stroke="#e23030" stroke-width="0.800" stroke-dasharray="0.800 0.800"/></svg>
<span class="t " style="top:461.5px;font-size:12px;color:#000;letter-spacing:-0.124px;left:69.0px;">Constraint6</span>
<svg style="left:28px;top:483.0px" width="13" height="13" viewBox="0 0 13 13"><rect x="0" y="0" width="13" height="13" rx="2.200" fill="#0a5fc4"/><path d="M3.200 6.700l2.300 2.300 4.400 -4.600" fill="none" stroke="#fff" stroke-width="1.100"/></svg>
<svg style="left:47px;top:481.0px" width="16" height="16" viewBox="0 0 16 16"><path d="M0.500 5.600Q10 5.600 10.500 15" fill="none" stroke="#c81414" stroke-width="1.700"/><path d="M3.600 1.250L14.900 12.200" stroke="#8f0a0a" stroke-width="2.600"/><path d="M3.600 1.250L14.900 12.200" stroke="#e23030" stroke-width="0.800" stroke-dasharray="0.800 0.800"/></svg>
<span class="t " style="top:481.5px;font-size:12px;color:#000;letter-spacing:-0.124px;left:69.0px;">Constraint7</span>
<svg style="left:28px;top:503.0px" width="13" height="13" viewBox="0 0 13 13"><rect x="0" y="0" width="13" height="13" rx="2.200" fill="#0a5fc4"/><path d="M3.200 6.700l2.300 2.300 4.400 -4.600" fill="none" stroke="#fff" stroke-width="1.100"/></svg>
<svg style="left:47px;top:501.0px" width="16" height="16" viewBox="0 0 16 16"><path d="M0.500 5.600Q10 5.600 10.500 15" fill="none" stroke="#c81414" stroke-width="1.700"/><path d="M3.600 1.250L14.900 12.200" stroke="#8f0a0a" stroke-width="2.600"/><path d="M3.600 1.250L14.900 12.200" stroke="#e23030" stroke-width="0.800" stroke-dasharray="0.800 0.800"/></svg>
<span class="t " style="top:501.5px;font-size:12px;color:#000;letter-spacing:-0.124px;left:69.0px;">Constraint8</span>
<svg style="left:28px;top:523.0px" width="13" height="13" viewBox="0 0 13 13"><rect x="0" y="0" width="13" height="13" rx="2.200" fill="#0a5fc4"/><path d="M3.200 6.700l2.300 2.300 4.400 -4.600" fill="none" stroke="#fff" stroke-width="1.100"/></svg>
<svg style="left:47px;top:521.5px" width="16" height="16" viewBox="0 0 16 16"><path d="M7.500 2.500v11" stroke="#8f0a0a" stroke-width="1.600"/></svg>
<span class="t " style="top:521.5px;font-size:12px;color:#000;letter-spacing:-0.124px;left:69.0px;">Constraint9</span>
<div style="left:24px;top:539px;width:388px;height:9px;overflow:hidden;"><svg style="left:4px;top:4.5px" width="13" height="13" viewBox="0 0 13 13"><rect x="0" y="0" width="13" height="13" rx="2.200" fill="#0a5fc4"/><path d="M3.200 6.700l2.300 2.300 4.400 -4.600" fill="none" stroke="#fff" stroke-width="1.100"/></svg><svg style="left:23px;top:0.5px" width="16" height="16" viewBox="0 0 16 16"><path d="M7.500 2.500v11" stroke="#8f0a0a" stroke-width="1.600"/></svg><span class="t " style="top:3.0px;font-size:12px;color:#000;letter-spacing:-0.170px;left:45.0px;">Constraint10</span></div>
<svg style="left:29px;top:642.0px" width="13" height="13" viewBox="0 0 13 13"><rect x="0" y="0" width="13" height="13" rx="2.200" fill="#0a5fc4"/><path d="M3.200 6.700l2.300 2.300 4.400 -4.600" fill="none" stroke="#fff" stroke-width="1.100"/></svg>
<svg style="left:46px;top:640.5px" width="20" height="16" viewBox="0 0 20 16"><path d="M3 13L17 3" stroke="#cfcfcf" stroke-width="2.600"/><path d="M3 13L17 3" stroke="#9ad27a" stroke-width="1.200"/><circle cx="3" cy="13" r="2.100" fill="#e79a9a"/><circle cx="17" cy="3" r="2.100" fill="#e79a9a"/></svg>
<svg style="left:70px;top:640.5px" width="20" height="16" viewBox="0 0 20 16"><path d="M3 13L17 3" stroke="#cfcfcf" stroke-width="2.600"/><path d="M3 13L17 3" stroke="#e0e0e0" stroke-width="1.200"/><circle cx="3" cy="13" r="2.100" fill="#a6dc8c"/><circle cx="17" cy="3" r="2.100" fill="#e79a9a"/></svg>
<svg style="left:94px;top:640.5px" width="20" height="16" viewBox="0 0 20 16"><path d="M3 13L17 3" stroke="#cfcfcf" stroke-width="2.600"/><path d="M3 13L17 3" stroke="#e0e0e0" stroke-width="1.200"/><circle cx="3" cy="13" r="2.100" fill="#e79a9a"/><circle cx="17" cy="3" r="2.100" fill="#a6dc8c"/></svg>
<svg style="left:118px;top:640.5px" width="20" height="16" viewBox="0 0 20 16"><path d="M5 8h10" stroke="#c8c8c8" stroke-width="1.200"/></svg>
<span class="t " style="top:640.5px;font-size:12px;color:#000;letter-spacing:-0.146px;left:142.0px;">1-Linie</span>
<svg style="left:29px;top:662.0px" width="13" height="13" viewBox="0 0 13 13"><rect x="0" y="0" width="13" height="13" rx="2.200" fill="#0a5fc4"/><path d="M3.200 6.700l2.300 2.300 4.400 -4.600" fill="none" stroke="#fff" stroke-width="1.100"/></svg>
<svg style="left:46px;top:660.5px" width="20" height="16" viewBox="0 0 20 16"><path d="M3 13L17 3" stroke="#cfcfcf" stroke-width="2.600"/><path d="M3 13L17 3" stroke="#9ad27a" stroke-width="1.200"/><circle cx="3" cy="13" r="2.100" fill="#e79a9a"/><circle cx="17" cy="3" r="2.100" fill="#e79a9a"/></svg>
<svg style="left:70px;top:660.5px" width="20" height="16" viewBox="0 0 20 16"><path d="M3 13L17 3" stroke="#cfcfcf" stroke-width="2.600"/><path d="M3 13L17 3" stroke="#e0e0e0" stroke-width="1.200"/><circle cx="3" cy="13" r="2.100" fill="#a6dc8c"/><circle cx="17" cy="3" r="2.100" fill="#e79a9a"/></svg>
<svg style="left:94px;top:660.5px" width="20" height="16" viewBox="0 0 20 16"><path d="M3 13L17 3" stroke="#cfcfcf" stroke-width="2.600"/><path d="M3 13L17 3" stroke="#e0e0e0" stroke-width="1.200"/><circle cx="3" cy="13" r="2.100" fill="#e79a9a"/><circle cx="17" cy="3" r="2.100" fill="#a6dc8c"/></svg>
<svg style="left:118px;top:660.5px" width="20" height="16" viewBox="0 0 20 16"><path d="M5 8h10" stroke="#c8c8c8" stroke-width="1.200"/></svg>
<span class="t " style="top:660.5px;font-size:12px;color:#000;letter-spacing:-0.146px;left:142.0px;">2-Linie</span>
<svg style="left:29px;top:682.0px" width="13" height="13" viewBox="0 0 13 13"><rect x="0" y="0" width="13" height="13" rx="2.200" fill="#0a5fc4"/><path d="M3.200 6.700l2.300 2.300 4.400 -4.600" fill="none" stroke="#fff" stroke-width="1.100"/></svg>
<svg style="left:46px;top:680.5px" width="20" height="16" viewBox="0 0 20 16"><path d="M3 13L17 3" stroke="#cfcfcf" stroke-width="2.600"/><path d="M3 13L17 3" stroke="#9ad27a" stroke-width="1.200"/><circle cx="3" cy="13" r="2.100" fill="#e79a9a"/><circle cx="17" cy="3" r="2.100" fill="#e79a9a"/></svg>
<svg style="left:70px;top:680.5px" width="20" height="16" viewBox="0 0 20 16"><path d="M3 13L17 3" stroke="#cfcfcf" stroke-width="2.600"/><path d="M3 13L17 3" stroke="#e0e0e0" stroke-width="1.200"/><circle cx="3" cy="13" r="2.100" fill="#a6dc8c"/><circle cx="17" cy="3" r="2.100" fill="#e79a9a"/></svg>
<svg style="left:94px;top:680.5px" width="20" height="16" viewBox="0 0 20 16"><path d="M3 13L17 3" stroke="#cfcfcf" stroke-width="2.600"/><path d="M3 13L17 3" stroke="#e0e0e0" stroke-width="1.200"/><circle cx="3" cy="13" r="2.100" fill="#e79a9a"/><circle cx="17" cy="3" r="2.100" fill="#a6dc8c"/></svg>
<svg style="left:118px;top:680.5px" width="20" height="16" viewBox="0 0 20 16"><path d="M5 8h10" stroke="#c8c8c8" stroke-width="1.200"/></svg>
<span class="t " style="top:680.5px;font-size:12px;color:#000;letter-spacing:-0.146px;left:142.0px;">3-Linie</span>
<svg style="left:29px;top:702.0px" width="13" height="13" viewBox="0 0 13 13"><rect x="0" y="0" width="13" height="13" rx="2.200" fill="#0a5fc4"/><path d="M3.200 6.700l2.300 2.300 4.400 -4.600" fill="none" stroke="#fff" stroke-width="1.100"/></svg>
<svg style="left:46px;top:700.5px" width="20" height="16" viewBox="0 0 20 16"><path d="M3 13L17 3" stroke="#cfcfcf" stroke-width="2.600"/><path d="M3 13L17 3" stroke="#9ad27a" stroke-width="1.200"/><circle cx="3" cy="13" r="2.100" fill="#e79a9a"/><circle cx="17" cy="3" r="2.100" fill="#e79a9a"/></svg>
<svg style="left:70px;top:700.5px" width="20" height="16" viewBox="0 0 20 16"><path d="M3 13L17 3" stroke="#cfcfcf" stroke-width="2.600"/><path d="M3 13L17 3" stroke="#e0e0e0" stroke-width="1.200"/><circle cx="3" cy="13" r="2.100" fill="#a6dc8c"/><circle cx="17" cy="3" r="2.100" fill="#e79a9a"/></svg>
<svg style="left:94px;top:700.5px" width="20" height="16" viewBox="0 0 20 16"><path d="M3 13L17 3" stroke="#cfcfcf" stroke-width="2.600"/><path d="M3 13L17 3" stroke="#e0e0e0" stroke-width="1.200"/><circle cx="3" cy="13" r="2.100" fill="#e79a9a"/><circle cx="17" cy="3" r="2.100" fill="#a6dc8c"/></svg>
<svg style="left:118px;top:700.5px" width="20" height="16" viewBox="0 0 20 16"><path d="M5 8h10" stroke="#c8c8c8" stroke-width="1.200"/></svg>
<span class="t " style="top:700.5px;font-size:12px;color:#000;letter-spacing:-0.146px;left:142.0px;">4-Linie</span>
<svg style="left:29px;top:722.5px" width="13" height="13" viewBox="0 0 13 13"><rect x="0" y="0" width="13" height="13" rx="2.200" fill="#0a5fc4"/><path d="M3.200 6.700l2.300 2.300 4.400 -4.600" fill="none" stroke="#fff" stroke-width="1.100"/></svg>
<svg style="left:46px;top:721.0px" width="20" height="16" viewBox="0 0 20 16"><path d="M3 3.500C10 3.500 15 7 16 13" fill="none" stroke="#d4d4d4" stroke-width="2.600"/><path d="M3 3.500C10 3.500 15 7 16 13" fill="none" stroke="#9ad27a" stroke-width="1.200"/><circle cx="3" cy="3.500" r="1.900" fill="#e79a9a"/><circle cx="16" cy="13" r="1.900" fill="#e79a9a"/><circle cx="4" cy="13" r="1.900" fill="#e79a9a"/></svg>
<svg style="left:70px;top:721.0px" width="20" height="16" viewBox="0 0 20 16"><path d="M3 3.500C10 3.500 15 7 16 13" fill="none" stroke="#d4d4d4" stroke-width="2.600"/><path d="M3 3.500C10 3.500 15 7 16 13" fill="none" stroke="#e0e0e0" stroke-width="1.200"/><circle cx="3" cy="3.500" r="1.900" fill="#e79a9a"/><circle cx="16" cy="13" r="1.900" fill="#a6dc8c"/><circle cx="4" cy="13" r="1.900" fill="#e79a9a"/></svg>
<svg style="left:94px;top:721.0px" width="20" height="16" viewBox="0 0 20 16"><path d="M3 3.500C10 3.500 15 7 16 13" fill="none" stroke="#d4d4d4" stroke-width="2.600"/><path d="M3 3.500C10 3.500 15 7 16 13" fill="none" stroke="#e0e0e0" stroke-width="1.200"/><circle cx="3" cy="3.500" r="1.900" fill="#a6dc8c"/><circle cx="16" cy="13" r="1.900" fill="#e79a9a"/><circle cx="4" cy="13" r="1.900" fill="#e79a9a"/></svg>
<svg style="left:118px;top:721.0px" width="20" height="16" viewBox="0 0 20 16"><path d="M3 3.500C10 3.500 15 7 16 13" fill="none" stroke="#d4d4d4" stroke-width="2.600"/><path d="M3 3.500C10 3.500 15 7 16 13" fill="none" stroke="#e0e0e0" stroke-width="1.200"/><circle cx="3" cy="3.500" r="1.900" fill="#e79a9a"/><circle cx="16" cy="13" r="1.900" fill="#e79a9a"/><circle cx="4" cy="13" r="1.900" fill="#a6dc8c"/></svg>
<span class="t " style="top:721.0px;font-size:12px;color:#000;letter-spacing:-0.115px;left:142.0px;">5-Kreisbogen</span>
<svg style="left:29px;top:742.5px" width="13" height="13" viewBox="0 0 13 13"><rect x="0" y="0" width="13" height="13" rx="2.200" fill="#0a5fc4"/><path d="M3.200 6.700l2.300 2.300 4.400 -4.600" fill="none" stroke="#fff" stroke-width="1.100"/></svg>
<svg style="left:46px;top:741.0px" width="20" height="16" viewBox="0 0 20 16"><path d="M3 3.500C10 3.500 15 7 16 13" fill="none" stroke="#d4d4d4" stroke-width="2.600"/><path d="M3 3.500C10 3.500 15 7 16 13" fill="none" stroke="#9ad27a" stroke-width="1.200"/><circle cx="3" cy="3.500" r="1.900" fill="#e79a9a"/><circle cx="16" cy="13" r="1.900" fill="#e79a9a"/><circle cx="4" cy="13" r="1.900" fill="#e79a9a"/></svg>
<svg style="left:70px;top:741.0px" width="20" height="16" viewBox="0 0 20 16"><path d="M3 3.500C10 3.500 15 7 16 13" fill="none" stroke="#d4d4d4" stroke-width="2.600"/><path d="M3 3.500C10 3.500 15 7 16 13" fill="none" stroke="#e0e0e0" stroke-width="1.200"/><circle cx="3" cy="3.500" r="1.900" fill="#e79a9a"/><circle cx="16" cy="13" r="1.900" fill="#a6dc8c"/><circle cx="4" cy="13" r="1.900" fill="#e79a9a"/></svg>
<svg style="left:94px;top:741.0px" width="20" height="16" viewBox="0 0 20 16"><path d="M3 3.500C10 3.500 15 7 16 13" fill="none" stroke="#d4d4d4" stroke-width="2.600"/><path d="M3 3.500C10 3.500 15 7 16 13" fill="none" stroke="#e0e0e0" stroke-width="1.200"/><circle cx="3" cy="3.500" r="1.900" fill="#a6dc8c"/><circle cx="16" cy="13" r="1.900" fill="#e79a9a"/><circle cx="4" cy="13" r="1.900" fill="#e79a9a"/></svg>
<svg style="left:118px;top:741.0px" width="20" height="16" viewBox="0 0 20 16"><path d="M3 3.500C10 3.500 15 7 16 13" fill="none" stroke="#d4d4d4" stroke-width="2.600"/><path d="M3 3.500C10 3.500 15 7 16 13" fill="none" stroke="#e0e0e0" stroke-width="1.200"/><circle cx="3" cy="3.500" r="1.900" fill="#e79a9a"/><circle cx="16" cy="13" r="1.900" fill="#e79a9a"/><circle cx="4" cy="13" r="1.900" fill="#a6dc8c"/></svg>
<span class="t " style="top:741.0px;font-size:12px;color:#000;letter-spacing:-0.115px;left:142.0px;">6-Kreisbogen</span>
<svg style="left:29px;top:762.5px" width="13" height="13" viewBox="0 0 13 13"><rect x="0" y="0" width="13" height="13" rx="2.200" fill="#0a5fc4"/><path d="M3.200 6.700l2.300 2.300 4.400 -4.600" fill="none" stroke="#fff" stroke-width="1.100"/></svg>
<svg style="left:46px;top:761.0px" width="20" height="16" viewBox="0 0 20 16"><path d="M3 3.500C10 3.500 15 7 16 13" fill="none" stroke="#d4d4d4" stroke-width="2.600"/><path d="M3 3.500C10 3.500 15 7 16 13" fill="none" stroke="#9ad27a" stroke-width="1.200"/><circle cx="3" cy="3.500" r="1.900" fill="#e79a9a"/><circle cx="16" cy="13" r="1.900" fill="#e79a9a"/><circle cx="4" cy="13" r="1.900" fill="#e79a9a"/></svg>
<svg style="left:70px;top:761.0px" width="20" height="16" viewBox="0 0 20 16"><path d="M3 3.500C10 3.500 15 7 16 13" fill="none" stroke="#d4d4d4" stroke-width="2.600"/><path d="M3 3.500C10 3.500 15 7 16 13" fill="none" stroke="#e0e0e0" stroke-width="1.200"/><circle cx="3" cy="3.500" r="1.900" fill="#e79a9a"/><circle cx="16" cy="13" r="1.900" fill="#a6dc8c"/><circle cx="4" cy="13" r="1.900" fill="#e79a9a"/></svg>
<svg style="left:94px;top:761.0px" width="20" height="16" viewBox="0 0 20 16"><path d="M3 3.500C10 3.500 15 7 16 13" fill="none" stroke="#d4d4d4" stroke-width="2.600"/><path d="M3 3.500C10 3.500 15 7 16 13" fill="none" stroke="#e0e0e0" stroke-width="1.200"/><circle cx="3" cy="3.500" r="1.900" fill="#a6dc8c"/><circle cx="16" cy="13" r="1.900" fill="#e79a9a"/><circle cx="4" cy="13" r="1.900" fill="#e79a9a"/></svg>
<svg style="left:118px;top:761.0px" width="20" height="16" viewBox="0 0 20 16"><path d="M3 3.500C10 3.500 15 7 16 13" fill="none" stroke="#d4d4d4" stroke-width="2.600"/><path d="M3 3.500C10 3.500 15 7 16 13" fill="none" stroke="#e0e0e0" stroke-width="1.200"/><circle cx="3" cy="3.500" r="1.900" fill="#e79a9a"/><circle cx="16" cy="13" r="1.900" fill="#e79a9a"/><circle cx="4" cy="13" r="1.900" fill="#a6dc8c"/></svg>
<span class="t " style="top:761.0px;font-size:12px;color:#000;letter-spacing:-0.115px;left:142.0px;">7-Kreisbogen</span>
<svg style="left:29px;top:782.5px" width="13" height="13" viewBox="0 0 13 13"><rect x="0" y="0" width="13" height="13" rx="2.200" fill="#0a5fc4"/><path d="M3.200 6.700l2.300 2.300 4.400 -4.600" fill="none" stroke="#fff" stroke-width="1.100"/></svg>
<svg style="left:46px;top:781.0px" width="20" height="16" viewBox="0 0 20 16"><path d="M3 3.500C10 3.500 15 7 16 13" fill="none" stroke="#d4d4d4" stroke-width="2.600"/><path d="M3 3.500C10 3.500 15 7 16 13" fill="none" stroke="#9ad27a" stroke-width="1.200"/><circle cx="3" cy="3.500" r="1.900" fill="#e79a9a"/><circle cx="16" cy="13" r="1.900" fill="#e79a9a"/><circle cx="4" cy="13" r="1.900" fill="#e79a9a"/></svg>
<svg style="left:70px;top:781.0px" width="20" height="16" viewBox="0 0 20 16"><path d="M3 3.500C10 3.500 15 7 16 13" fill="none" stroke="#d4d4d4" stroke-width="2.600"/><path d="M3 3.500C10 3.500 15 7 16 13" fill="none" stroke="#e0e0e0" stroke-width="1.200"/><circle cx="3" cy="3.500" r="1.900" fill="#e79a9a"/><circle cx="16" cy="13" r="1.900" fill="#a6dc8c"/><circle cx="4" cy="13" r="1.900" fill="#e79a9a"/></svg>
<svg style="left:94px;top:781.0px" width="20" height="16" viewBox="0 0 20 16"><path d="M3 3.500C10 3.500 15 7 16 13" fill="none" stroke="#d4d4d4" stroke-width="2.600"/><path d="M3 3.500C10 3.500 15 7 16 13" fill="none" stroke="#e0e0e0" stroke-width="1.200"/><circle cx="3" cy="3.500" r="1.900" fill="#a6dc8c"/><circle cx="16" cy="13" r="1.900" fill="#e79a9a"/><circle cx="4" cy="13" r="1.900" fill="#e79a9a"/></svg>
<svg style="left:118px;top:781.0px" width="20" height="16" viewBox="0 0 20 16"><path d="M3 3.500C10 3.500 15 7 16 13" fill="none" stroke="#d4d4d4" stroke-width="2.600"/><path d="M3 3.500C10 3.500 15 7 16 13" fill="none" stroke="#e0e0e0" stroke-width="1.200"/><circle cx="3" cy="3.500" r="1.900" fill="#e79a9a"/><circle cx="16" cy="13" r="1.900" fill="#e79a9a"/><circle cx="4" cy="13" r="1.900" fill="#a6dc8c"/></svg>
<span class="t " style="top:781.0px;font-size:12px;color:#000;letter-spacing:-0.115px;left:142.0px;">8-Kreisbogen</span>
<svg style="left:29px;top:802.0px" width="13" height="13" viewBox="0 0 13 13"><rect x="0" y="0" width="13" height="13" rx="2.200" fill="#0a5fc4"/><path d="M3.200 6.700l2.300 2.300 4.400 -4.600" fill="none" stroke="#fff" stroke-width="1.100"/></svg>
<svg style="left:46px;top:800.5px" width="20" height="16" viewBox="0 0 20 16"><path d="M5 8h10" stroke="#c8c8c8" stroke-width="1.200"/></svg>
<svg style="left:70px;top:800.5px" width="20" height="16" viewBox="0 0 20 16"><ellipse cx="10" cy="8" rx="3.600" ry="2.800" fill="#a9a3ee"/></svg>
<svg style="left:94px;top:800.5px" width="20" height="16" viewBox="0 0 20 16"><path d="M5 8h10" stroke="#c8c8c8" stroke-width="1.200"/></svg>
<svg style="left:118px;top:800.5px" width="20" height="16" viewBox="0 0 20 16"><path d="M5 8h10" stroke="#c8c8c8" stroke-width="1.200"/></svg>
<span class="t " style="top:800.5px;font-size:12px;color:#000;letter-spacing:0.092px;left:142.0px;">9-Punkt</span>
<div style="left:24px;top:819px;width:388px;height:9px;overflow:hidden;"><svg style="left:5px;top:4.5px" width="13" height="13" viewBox="0 0 13 13"><rect x="0" y="0" width="13" height="13" rx="2.200" fill="#0a5fc4"/><path d="M3.200 6.700l2.300 2.300 4.400 -4.600" fill="none" stroke="#fff" stroke-width="1.100"/></svg><svg style="left:46px;top:3px" width="20" height="16" viewBox="0 0 20 16"><ellipse cx="10" cy="8" rx="3.600" ry="2.800" fill="#a9a3ee"/></svg><span class="t " style="top:3.0px;font-size:12px;color:#000;left:118.0px;">10-Punkt</span></div>
<div style="left:457px;top:112px;width:991px;height:867px;background:#111;border-radius:5px 5px 0 0;"></div>
<div style="left:458px;top:113px;width:989px;height:865px;background:linear-gradient(180deg,#fdfeff 0px,#9bb7d6 1.500px,#a9c2de 9px,#c3d7ed 26px,#bdd3ec 60px,#b9d1ea 100%);border-radius:4px 4px 0 0;"></div>
<div style="left:459px;top:976px;width:988px;height:2px;background:#35c6f4;"></div>
<div style="left:1446px;top:118px;width:1px;height:859px;background:#35c6f4;"></div>
<div style="left:465px;top:139px;width:975px;height:832px;background:#fff;"></div>
<svg style="left:467px;top:122px" width="14.500" height="15.500" viewBox="0 0 16 16"><rect x="0.500" y="0.500" width="15" height="15" rx="2" fill="#f4f4f4" stroke="#b0b0b0"/><path d="M3 7l5 -2 5 1.500v5l-5 2.500 -5 -2z" fill="#3465a4" stroke="#1d3557" stroke-width="0.800"/><path d="M3 7l5 2 5 -2.500M8 9v5" stroke="#1d3557" stroke-width="0.700" fill="none"/><circle cx="10.500" cy="4" r="2.600" fill="#e02020"/></svg>
<span class="t " style="top:122.8px;font-size:12px;color:#000;letter-spacing:-0.408px;left:486.5px;">Deckel 14 : 1*</span>
<div style="left:1341px;top:118px;width:32px;height:18px;background:linear-gradient(180deg,#c9daef 0%,#bdd1ea 47%,#9ebada 53%,#adc6e2 100%);border:1px solid #5a6d86;border-radius:3px;box-shadow:inset 0 0 0 1px rgba(255,255,255,0.45);"></div><svg style="left:1350px;top:126px" width="14" height="6" viewBox="0 0 14 6"><rect x="1" y="0.500" width="11" height="4" rx="1" fill="#fff" stroke="#454f5c" stroke-width="0.900"/></svg>
<div style="left:1375px;top:118px;width:32px;height:18px;background:linear-gradient(180deg,#c9daef 0%,#bdd1ea 47%,#9ebada 53%,#adc6e2 100%);border:1px solid #5a6d86;border-radius:3px;box-shadow:inset 0 0 0 1px rgba(255,255,255,0.45);"></div><svg style="left:1385px;top:121px" width="12" height="11" viewBox="0 0 12 11"><rect x="0.500" y="0.500" width="10.500" height="9" rx="1" fill="#fff" stroke="#454f5c" stroke-width="0.900"/><rect x="3.500" y="3.500" width="4.500" height="3" fill="none" stroke="#454f5c" stroke-width="0.900"/></svg>
<div style="left:1409px;top:118px;width:32px;height:18px;background:linear-gradient(180deg,#eaa898 0%,#dd8472 47%,#c13f29 53%,#d9705a 100%);border:1px solid #5c1a22;border-radius:3px;box-shadow:inset 0 0 0 1px rgba(255,255,255,0.45);"></div><svg style="left:1418px;top:121px" width="14" height="12" viewBox="0 0 14 12"><path d="M1.500 2h3L7 4.500 9.500 2h3L8.700 6 12.500 10h-3L7 7.500 4.500 10h-3L5.300 6z" fill="#fff" stroke="#454f5c" stroke-width="0.900" stroke-linejoin="round"/></svg>
<svg style="left:0;top:0" width="1920" height="1030" viewBox="0 0 1920 1030"><g stroke="#ff7215" stroke-width="2" fill="none"><path d="M863 317H610M937 317H1185"/><path d="M1270 363V476M1270 541.500V764"/></g><g fill="#ff7215"><path d="M608.500 317l11 -3.300v6.600z"/><path d="M1186.500 317l-11 -3.300v6.600z"/><path d="M1270 361.500l-3.300 11h6.600z"/><path d="M1270 765.500l-3.300 -11h6.600z"/></g><g fill="none" stroke="#00f000" stroke-width="2"><path d="M636.500 361H1158.500M1187.2 389.500V737.500M1158.500 766.1H636.500M608 737.500V389.500"/></g><g fill="none" stroke="#00f000" stroke-width="1.300"><path d="M608 390A29 29 0 0 1 637 361"/><path d="M1158.200 361A29 29 0 0 1 1187.2 390"/><path d="M1187.2 737.200A29 29 0 0 1 1158.200 766.1"/><path d="M637 766.1A29 29 0 0 1 608 737.200"/></g><path d="M898 139V971" stroke="#66ff66" stroke-width="2"/><path d="M465 563.500H1440" stroke="#c8595c" stroke-width="1.800"/><g stroke="#ff7215" stroke-width="2" fill="none"><path d="M608 296V389"/><path d="M1187.2 296V389"/><path d="M1158.500 361H1291M1158.500 766.1H1291"/><path d="M1158.500 389.300L1236 327.500" stroke-width="1.200"/></g><path d="M1180.500 371.600L1175.300 379.600L1171.400 374.800z" fill="#ff7215"/><text x="1166" y="771.800" font-family="Liberation Serif,serif" font-weight="700" font-size="14.500" fill="#f42a0c" textLength="15.600" lengthAdjust="spacingAndGlyphs">13</text><path d="M1158.500 766.1H1291" stroke="#ff7215" stroke-width="2"/><g fill="#00f000"><path d="M605.6 355.8h3.800l2.600 2.600v3.800l-2.600 2.600h-3.800l-2.600 -2.600v-3.800z"/><path d="M634.5 355.8h3.800l2.600 2.600v3.800l-2.600 2.600h-3.800l-2.600 -2.600v-3.800z"/><path d="M605.6 384.9h3.800l2.600 2.600v3.800l-2.600 2.600h-3.800l-2.600 -2.600v-3.800z"/><path d="M634.5 384.9h3.800l2.600 2.600v3.800l-2.600 2.600h-3.800l-2.600 -2.600v-3.800z"/><path d="M1156.6 355.9h3.800l2.600 2.600v3.800l-2.600 2.600h-3.800l-2.600 -2.600v-3.800z"/><path d="M1185.4 384.8h3.800l2.600 2.600v3.800l-2.600 2.600h-3.800l-2.600 -2.600v-3.800z"/><path d="M1156.6 384.8h3.800l2.600 2.600v3.800l-2.600 2.600h-3.800l-2.600 -2.600v-3.800z"/><path d="M605.6 732.9h3.800l2.600 2.600v3.800l-2.600 2.600h-3.800l-2.600 -2.600v-3.800z"/><path d="M634.5 732.9h3.800l2.600 2.600v3.800l-2.600 2.600h-3.800l-2.600 -2.600v-3.800z"/><path d="M634.5 761.8h3.800l2.600 2.600v3.800l-2.600 2.600h-3.800l-2.600 -2.600v-3.800z"/><path d="M1156.4 732.9h3.800l2.600 2.600v3.800l-2.600 2.600h-3.800l-2.600 -2.600v-3.800z"/><path d="M1185.6 732.9h3.800l2.600 2.600v3.800l-2.600 2.600h-3.800l-2.600 -2.600v-3.800z"/><path d="M1156.4 762.0h3.800l2.600 2.600v3.800l-2.600 2.600h-3.800l-2.600 -2.600v-3.800z"/><path d="M1185.6 762.0h3.800l2.600 2.600v3.800l-2.600 2.600h-3.800l-2.600 -2.600v-3.800z"/></g><path d="M608 350V389.400" stroke="#ff7215" stroke-width="2"/><path d="M1187.2 380V389.300" stroke="#ff7215" stroke-width="2"/><path d="M1158.500 361H1170" stroke="#ff7215" stroke-width="2"/><path d="M1158.300 766.1H1195" stroke="#ff7215" stroke-width="2"/><path d="M1158.500 389.300L1166 383.300" stroke="#ff7215" stroke-width="1.200"/><circle cx="898" cy="563.500" r="3.800" fill="#e02020"/><circle cx="898" cy="563.500" r="2.700" fill="#1b1b6e"/><path d="M898 446l-2.500 15.500h5z" fill="#1f7a1f"/><path d="M1017 563.500l-15.500 -2.700v5.400z" fill="#7a1f1f"/><g stroke="#f42a0c" stroke-width="2" fill="none" stroke-linecap="butt"><path d="M640 389.400H661M651.200 383.300l10.800 6.100 -10.800 6"/><path d="M636.900 393V414M630.400 404.400l6.500 10.200 6.800 -10.200"/><path d="M632.1 375.8L642.3 385.7" stroke-width="2.800" stroke-linecap="butt"/><path d="M629.4 379.6Q637.6 379.6 637.6 388" stroke-width="1.700"/><path d="M624 384L633.5 393.5" stroke-width="2.800" stroke-linecap="butt"/><path d="M621.6 387.4Q630.1 387.4 630.1 396.2" stroke-width="1.700"/><path d="M599.700 386C598.500 381 600 375 611 374.200" stroke-width="1.800"/><circle cx="601.900" cy="376.900" r="1.700" fill="#f42a0c" stroke="none"/><path d="M1154 389.600H1134M1143.800 383.500l-10.600 6.100 10.600 5.900"/><path d="M1154 375.7L1172 393.7" stroke-width="2.800" stroke-linecap="butt"/><path d="M1151.6 379.4Q1168.3 379.4 1168.3 396.4" stroke-width="1.700"/><path d="M636.700 733V712.500M630.200 722.500l6.500 -10.200 6.600 10.200"/><path d="M891.800 382H902.100"/><path d="M891.300 386.300l4.500 3.800 -4.500 3.700M902.700 386.300l-4.500 3.800 4.500 3.700"/><path d="M628 558.400V569"/><path d="M631.600 559.200l4 4.500 4 -4.500M631.600 568.600l4 -4.500 4 4.500"/><path d="M1166 558.400V569"/><path d="M892 745.500H902"/><path d="M1152.800 753.800C1151.500 748 1153 742.500 1164.500 742.400" stroke-width="1.800"/><circle cx="1155.100" cy="744.900" r="1.700" fill="#f42a0c" stroke="none"/><path d="M1153.8 775.9L1164 785.7" stroke-width="2.800" stroke-linecap="butt"/><path d="M1151.8 780Q1160 780 1160 788.1" stroke-width="1.700"/><path d="M579.2 783.2L590.2 792.6" stroke-width="2.800" stroke-linecap="butt"/><path d="M577.5 786.5Q586.1 786.5 586.1 795" stroke-width="1.700"/><path d="M580 769.900h8.200M580 773.400h8.200" stroke-width="1.400"/></g><text x="591.400" y="778.900" font-family="Liberation Serif,serif" font-weight="700" font-size="14.500" fill="#f42a0c" textLength="16.800" lengthAdjust="spacingAndGlyphs">13</text><text x="900.400" y="323.900" text-anchor="middle" font-family="Liberation Sans,sans-serif" font-size="17.500" fill="#d08040" stroke="#d08040" stroke-width="0.450" textLength="59" lengthAdjust="spacingAndGlyphs">100 mm</text><path d="M898 300V335" stroke="#66ff66" stroke-width="2"/><text transform="translate(1277.200 508.200) rotate(-90)" text-anchor="middle" font-family="Liberation Sans,sans-serif" font-size="17.500" fill="#d08040" stroke="#d08040" stroke-width="0.450" textLength="50" lengthAdjust="spacingAndGlyphs">70 mm</text><text transform="translate(1266 313.200) rotate(-38.200)" text-anchor="middle" font-family="Liberation Sans,sans-serif" font-size="17.500" fill="#d08040" stroke="#d08040" stroke-width="0.450" textLength="53" lengthAdjust="spacingAndGlyphs">R5 mm</text><g fill="#f8f9fb" stroke="#6a6a6a" stroke-width="0.900"><path d="M1368 145.500l12 13h-24z"/><path d="M1368 276.500l12 -13h-24z"/><path d="M1302.500 211l13.500 -12v24z"/><path d="M1433.500 211l-13.500 -12v24z"/><circle cx="1425" cy="153.500" r="6.800"/><path d="M1350 152c-13 4 -22 10 -29 19l-2 -7 -2.500 15.500 15.500 -3 -7 -2c6 -7 13 -12 26 -16z"/><path d="M1386 152c13 4 22 10 29 19l2 -7 2.500 15.500 -15.500 -3 7 -2c-6 -7 -13 -12 -26 -16z"/><path d="M1412.500 248l10 3.500v12l-10 4 -10 -4v-12z"/><path d="M1402.500 251.500l10 3.500 10 -3.500M1412.500 255v12.500" fill="none" stroke="#444"/></g><g fill="#f8f9fb" stroke="#3c3c3c" stroke-width="1.100"><path d="M1344.500 180h47l8 8v46l-8 8h-47l-8 -8v-46z"/><path d="M1351.500 187.500h33l7 7v33l-7 7h-33l-7 -7v-33z" stroke-width="0.900"/><path d="M1351.500 179.500v8M1384.500 179.500v8M1351.500 234.500v8M1384.500 234.500v8M1336 194.500h8.500M1336 227.500h8.500M1391.500 194.500h8.500M1391.500 227.500h8.500" stroke-width="0.900"/></g><text x="1368" y="215.500" text-anchor="middle" font-family="Liberation Sans,sans-serif" font-size="12.500" fill="#858585" textLength="34" lengthAdjust="spacingAndGlyphs">OBEN</text><path d="M1333 194V245" stroke="#55f055" stroke-width="1.500"/><path d="M1334 246H1385" stroke="#ff6a6a" stroke-width="1.800"/><rect x="1332" y="245" width="2" height="2" fill="#22f"/><path d="M1398.500 901v25" stroke="#1f7a1f" stroke-width="1"/><path d="M1398.500 901l3.800 9.500h-7.600z" fill="#1f7a1f"/><path d="M1400 929.500h26" stroke="#7a1f1f" stroke-width="1"/><path d="M1427 929.500l-9.500 -3.800v7.600z" fill="#7a1f1f"/><path d="M1398.500 925l4.500 4.500 -4.500 4.500 -4.500 -4.500z" fill="#1c1c80"/><text x="1399" y="899" font-family="Liberation Sans,sans-serif" font-size="9.500" font-weight="700" fill="#111">Y</text><text x="1427.5" y="928.5" font-family="Liberation Sans,sans-serif" font-size="9.500" font-weight="700" fill="#111">X</text><text x="1399.5" y="928" font-family="Liberation Sans,sans-serif" font-size="9.500" font-weight="700" fill="#111">Z</text></svg>
<div style="left:1449px;top:112px;width:471px;height:867px;background:#4e4e4e;border-radius:5px 5px 0 0;"></div>
<div style="left:1451px;top:113px;width:468px;height:865px;background:linear-gradient(180deg,#fdfeff 0px,#b5c7dc 1.500px,#c0d0e3 9px,#d6e2f0 26px,#d9e5f3 60px,#dbe6f4 100%);border-radius:4px 4px 0 0;"></div>
<div style="left:1457px;top:139px;width:455px;height:832px;background:#f0f0f0;"></div>
<svg style="left:1459px;top:123px" width="16" height="14" viewBox="0 0 16 14"><rect x="0.500" y="0.500" width="15" height="13" fill="#fff" stroke="#333"/><path d="M0.500 3.5h15" stroke="#333" stroke-width="1"/><path d="M0.500 6.5h15" stroke="#333" stroke-width="1"/><path d="M0.500 9.5h15" stroke="#333" stroke-width="1"/><path d="M4.500 0.500v13" stroke="#333" stroke-width="1"/></svg>
<span class="t " style="top:122.5px;font-size:12px;color:#000;letter-spacing:-0.403px;left:1478.0px;">Deckel 14*</span>
<div style="left:1813px;top:118px;width:32px;height:18px;background:linear-gradient(180deg,#e3ebf5 0%,#d5e0ee 50%,#cfdbeb 100%);border:1px solid #8c9bb0;border-radius:3px;box-shadow:inset 0 0 0 1px rgba(255,255,255,0.45);"></div><svg style="left:1822px;top:126px" width="14" height="6" viewBox="0 0 14 6"><rect x="1" y="0.500" width="11" height="4" rx="1" fill="#f4f6fa" stroke="#5f6975" stroke-width="0.900"/></svg>
<div style="left:1847px;top:118px;width:32px;height:18px;background:linear-gradient(180deg,#e3ebf5 0%,#d5e0ee 50%,#cfdbeb 100%);border:1px solid #8c9bb0;border-radius:3px;box-shadow:inset 0 0 0 1px rgba(255,255,255,0.45);"></div><svg style="left:1857px;top:121px" width="12" height="11" viewBox="0 0 12 11"><rect x="0.500" y="0.500" width="10.500" height="9" rx="1" fill="#f4f6fa" stroke="#5f6975" stroke-width="0.900"/><rect x="3.500" y="3.500" width="4.500" height="3" fill="none" stroke="#5f6975" stroke-width="0.900"/></svg>
<div style="left:1881px;top:118px;width:32px;height:18px;background:linear-gradient(180deg,#e3ebf5 0%,#d5e0ee 50%,#cfdbeb 100%);border:1px solid #8c9bb0;border-radius:3px;box-shadow:inset 0 0 0 1px rgba(255,255,255,0.45);"></div><svg style="left:1890px;top:121px" width="14" height="12" viewBox="0 0 14 12"><path d="M1.500 2h3L7 4.500 9.500 2h3L8.700 6 12.500 10h-3L7 7.500 4.500 10h-3L5.300 6z" fill="#f4f6fa" stroke="#5f6975" stroke-width="0.900" stroke-linejoin="round"/></svg>
<span class="t " style="top:150.5px;font-size:12px;color:#000;letter-spacing:0.044px;left:1465.0px;">Inhalt:</span>
<span class="t " style="top:150.5px;font-size:12px;color:#000;letter-spacing:-0.557px;left:1780.0px;">Alias:</span>
<div style="left:1505px;top:149px;width:269px;height:19px;background:#fff;border-bottom:1px solid #a8a8a8;border-radius:2px;"></div>
<div style="left:1814px;top:149px;width:88px;height:19px;background:#fff;border-bottom:1px solid #a8a8a8;border-radius:2px;"></div>
<div style="left:1466px;top:174px;width:437px;height:788px;background:#f0f0f0;border:1px solid #7a7a7a;"></div>
<div style="left:1467px;top:175px;width:419px;height:769px;background:#fff;"></div>
<div style="left:1586px;top:175px;width:1px;height:769px;background:#d4d4d4;"></div>
<span class="t " style="top:182.5px;font-size:12px;color:#000;left:1350.5px;width:400px;text-align:center;">A</span>
<div style="left:1639px;top:175px;width:1px;height:769px;background:#d4d4d4;"></div>
<span class="t " style="top:182.5px;font-size:12px;color:#000;left:1412.0px;width:400px;text-align:center;">B</span>
<div style="left:1720px;top:175px;width:1px;height:769px;background:#d4d4d4;"></div>
<span class="t " style="top:182.5px;font-size:12px;color:#000;left:1479.0px;width:400px;text-align:center;">C</span>
<div style="left:1811px;top:175px;width:1px;height:769px;background:#d4d4d4;"></div>
<span class="t " style="top:182.5px;font-size:12px;color:#000;left:1565.0px;width:400px;text-align:center;">D</span>
<div style="left:1871px;top:175px;width:1px;height:769px;background:#d4d4d4;"></div>
<span class="t " style="top:182.5px;font-size:12px;color:#000;left:1640.5px;width:400px;text-align:center;">E</span>
<div style="left:1886px;top:175px;width:1px;height:769px;background:#d4d4d4;"></div>
<div style="left:1516px;top:175px;width:1px;height:769px;background:#dcdcdc;"></div>
<div style="left:1516px;top:175px;width:370px;height:31px;background:linear-gradient(180deg,#fff 60%,rgba(255,255,255,0) 100%);"></div>
<span class="t " style="top:182.5px;font-size:12px;color:#000;left:1350.5px;width:400px;text-align:center;">A</span>
<span class="t " style="top:182.5px;font-size:12px;color:#000;left:1412.0px;width:400px;text-align:center;">B</span>
<span class="t " style="top:182.5px;font-size:12px;color:#000;left:1479.0px;width:400px;text-align:center;">C</span>
<span class="t " style="top:182.5px;font-size:12px;color:#000;left:1565.0px;width:400px;text-align:center;">D</span>
<span class="t " style="top:182.5px;font-size:12px;color:#000;left:1640.5px;width:400px;text-align:center;">E</span>
<span class="t " style="top:212.5px;font-size:12px;color:#000;letter-spacing:-0.674px;left:1471.0px;">1</span>
<span class="t " style="top:211.5px;font-size:12px;color:#000;font-weight:700;letter-spacing:0.264px;text-decoration:underline;left:1520.0px;">Alias</span>
<span class="t " style="top:211.5px;font-size:12px;color:#000;font-weight:700;letter-spacing:-0.382px;text-decoration:underline;left:1590.0px;">Eingabe</span>
<span class="t " style="top:211.5px;font-size:12px;color:#000;font-weight:700;letter-spacing:0.033px;text-decoration:underline;left:1643.0px;">Parameter</span>
<span class="t " style="top:211.5px;font-size:12px;color:#000;font-weight:700;letter-spacing:0.096px;text-decoration:underline;left:1724.0px;">Notizen</span>
<span class="t " style="top:211.5px;font-size:12px;color:#000;font-weight:700;letter-spacing:-0.211px;text-decoration:underline;left:1815.0px;">Speicher</span>
<div style="left:1517px;top:234px;width:369px;height:1px;background:#d4d4d4;"></div>
<span class="t " style="top:242.5px;font-size:12px;color:#000;letter-spacing:-0.674px;left:1471.0px;">2</span>
<span class="t " style="top:241.5px;font-size:12px;color:#f0142d;letter-spacing:0.048px;left:1643.0px;">Nicht ändern!</span>
<span class="t " style="top:241.5px;font-size:12px;color:#000;font-weight:700;letter-spacing:-0.035px;left:1724.0px;">Kiste Maße</span>
<span class="t " style="top:241.5px;font-size:12px;color:#000;font-weight:700;letter-spacing:-0.262px;left:1815.0px;">Version 1</span>
<div style="left:1871px;top:235px;width:15px;height:29px;overflow:hidden;"><span class="t " style="top:6.5px;font-size:12px;color:#000;font-weight:700;letter-spacing:-0.262px;left:4.0px;">Version 2</span></div>
<div style="left:1517px;top:264px;width:369px;height:1px;background:#d4d4d4;"></div>
<span class="t " style="top:272.5px;font-size:12px;color:#000;letter-spacing:-0.674px;left:1471.0px;">3</span>
<span class="t " style="top:271.5px;font-size:12px;color:#000;letter-spacing:-0.302px;left:1520.0px;">km_Laenge</span>
<div style="left:1587px;top:265px;width:52px;height:29px;background:#a8fd7e;"></div>
<span class="t " style="top:271.5px;font-size:12px;color:#000;letter-spacing:-0.674px;right:284.7px;">100</span>
<div style="left:1640px;top:265px;width:80px;height:29px;background:#ffff9e;"></div>
<span class="t " style="top:271.5px;font-size:12px;color:#000;letter-spacing:-0.337px;right:203.3px;">100,00 mm</span>
<span class="t " style="top:271.5px;font-size:12px;color:#000;letter-spacing:-0.286px;left:1724.0px;">Länge (außen)</span>
<div style="left:1812px;top:265px;width:59px;height:29px;background:#a8fd7e;"></div>
<span class="t " style="top:271.5px;font-size:12px;color:#000;letter-spacing:-0.674px;right:52.7px;">100</span>
<div style="left:1517px;top:294px;width:369px;height:1px;background:#d4d4d4;"></div>
<span class="t " style="top:302.5px;font-size:12px;color:#000;letter-spacing:-0.674px;left:1471.0px;">4</span>
<span class="t " style="top:301.5px;font-size:12px;color:#000;letter-spacing:-0.224px;left:1520.0px;">km_Breite</span>
<div style="left:1587px;top:295px;width:52px;height:29px;background:#a8fd7e;"></div>
<span class="t " style="top:301.5px;font-size:12px;color:#000;letter-spacing:-0.674px;right:284.7px;">70</span>
<div style="left:1640px;top:295px;width:80px;height:29px;background:#ffff9e;"></div>
<span class="t " style="top:301.5px;font-size:12px;color:#000;letter-spacing:-0.295px;right:203.3px;">70,00 mm</span>
<span class="t " style="top:301.5px;font-size:12px;color:#000;letter-spacing:-0.264px;left:1724.0px;">Breite (außen)</span>
<div style="left:1812px;top:295px;width:59px;height:29px;background:#a8fd7e;"></div>
<span class="t " style="top:301.5px;font-size:12px;color:#000;letter-spacing:-0.674px;right:52.7px;">70</span>
<div style="left:1517px;top:324px;width:369px;height:1px;background:#d4d4d4;"></div>
<span class="t " style="top:332.5px;font-size:12px;color:#000;letter-spacing:-0.674px;left:1471.0px;">5</span>
<span class="t " style="top:331.5px;font-size:12px;color:#000;letter-spacing:-0.129px;left:1520.0px;">km_Hoehe</span>
<div style="left:1587px;top:325px;width:52px;height:29px;background:#a8fd7e;"></div>
<span class="t " style="top:331.5px;font-size:12px;color:#000;letter-spacing:-0.674px;right:284.7px;">50</span>
<div style="left:1640px;top:325px;width:80px;height:29px;background:#ffff9e;"></div>
<span class="t " style="top:331.5px;font-size:12px;color:#000;letter-spacing:-0.295px;right:203.3px;">50,00 mm</span>
<span class="t " style="top:331.5px;font-size:12px;color:#000;letter-spacing:-0.170px;left:1724.0px;">Höhe (außen)</span>
<div style="left:1812px;top:325px;width:59px;height:29px;background:#a8fd7e;"></div>
<span class="t " style="top:331.5px;font-size:12px;color:#000;letter-spacing:-0.674px;right:52.7px;">50</span>
<div style="left:1517px;top:354px;width:369px;height:1px;background:#d4d4d4;"></div>
<span class="t " style="top:362.5px;font-size:12px;color:#000;letter-spacing:-0.674px;left:1471.0px;">6</span>
<span class="t " style="top:361.5px;font-size:12px;color:#000;letter-spacing:-0.336px;left:1520.0px;">km_Radius</span>
<div style="left:1587px;top:355px;width:52px;height:29px;background:#a8fd7e;"></div>
<span class="t " style="top:361.5px;font-size:12px;color:#000;letter-spacing:-0.674px;right:284.7px;">5</span>
<div style="left:1640px;top:355px;width:80px;height:29px;background:#ffff9e;"></div>
<span class="t " style="top:361.5px;font-size:12px;color:#000;letter-spacing:-0.240px;right:203.2px;">5,00 mm</span>
<span class="t " style="top:361.5px;font-size:12px;color:#000;letter-spacing:-0.116px;left:1724.0px;">Eckenrundung</span>
<div style="left:1812px;top:355px;width:59px;height:29px;background:#a8fd7e;"></div>
<span class="t " style="top:361.5px;font-size:12px;color:#000;letter-spacing:-0.674px;right:52.7px;">5</span>
<div style="left:1517px;top:384px;width:369px;height:1px;background:#d4d4d4;"></div>
<span class="t " style="top:392.5px;font-size:12px;color:#000;letter-spacing:-0.674px;left:1471.0px;">7</span>
<span class="t " style="top:391.5px;font-size:12px;color:#000;font-weight:700;letter-spacing:0.118px;left:1724.0px;">Deckel Maße</span>
<div style="left:1812px;top:385px;width:59px;height:29px;background:#a8fd7e;"></div>
<div style="left:1517px;top:414px;width:369px;height:1px;background:#d4d4d4;"></div>
<span class="t " style="top:422.5px;font-size:12px;color:#000;letter-spacing:-0.674px;left:1471.0px;">8</span>
<span class="t " style="top:421.5px;font-size:12px;color:#000;letter-spacing:-0.088px;left:1520.0px;">dm_Hoehe</span>
<div style="left:1587px;top:415px;width:52px;height:29px;background:#a8fd7e;"></div>
<span class="t " style="top:421.5px;font-size:12px;color:#000;letter-spacing:-0.674px;right:284.7px;">7</span>
<div style="left:1640px;top:415px;width:80px;height:29px;background:#ffff9e;"></div>
<span class="t " style="top:421.5px;font-size:12px;color:#000;letter-spacing:-0.240px;right:203.2px;">7,00 mm</span>
<span class="t " style="top:421.5px;font-size:12px;color:#000;letter-spacing:-0.246px;left:1724.0px;">Höhe Deckel</span>
<div style="left:1812px;top:415px;width:59px;height:29px;background:#a8fd7e;"></div>
<span class="t " style="top:421.5px;font-size:12px;color:#000;letter-spacing:-0.674px;right:52.7px;">2</span>
<div style="left:1517px;top:444px;width:369px;height:1px;background:#d4d4d4;"></div>
<span class="t " style="top:452.5px;font-size:12px;color:#000;letter-spacing:-0.674px;left:1471.0px;">9</span>
<span class="t " style="top:451.5px;font-size:12px;color:#000;letter-spacing:-0.254px;left:1520.0px;">dm_Spiel</span>
<div style="left:1587px;top:445px;width:52px;height:29px;background:#a8fd7e;"></div>
<span class="t " style="top:451.5px;font-size:12px;color:#000;letter-spacing:-0.674px;right:284.7px;">1</span>
<div style="left:1640px;top:445px;width:80px;height:29px;background:#ffff9e;"></div>
<span class="t " style="top:451.5px;font-size:12px;color:#000;letter-spacing:-0.240px;right:203.2px;">1,00 mm</span>
<span class="t " style="top:451.5px;font-size:12px;color:#000;letter-spacing:-0.290px;left:1724.0px;">Übermaß zur ...</span>
<div style="left:1812px;top:445px;width:59px;height:29px;background:#a8fd7e;"></div>
<span class="t " style="top:451.5px;font-size:12px;color:#000;letter-spacing:-0.674px;right:52.7px;">5</span>
<div style="left:1517px;top:474px;width:369px;height:1px;background:#d4d4d4;"></div>
<span class="t " style="top:482.5px;font-size:12px;color:#000;letter-spacing:-0.674px;left:1471.0px;">10</span>
<span class="t " style="top:481.5px;font-size:12px;color:#000;letter-spacing:-0.102px;left:1724.0px;">allg. Maße</span>
<div style="left:1517px;top:504px;width:369px;height:1px;background:#d4d4d4;"></div>
<span class="t " style="top:512.5px;font-size:12px;color:#000;letter-spacing:-0.229px;left:1471.0px;">11</span>
<span class="t " style="top:511.5px;font-size:12px;color:#000;letter-spacing:-0.235px;left:1520.0px;">Wandstae...</span>
<div style="left:1587px;top:505px;width:52px;height:29px;background:#a8fd7e;"></div>
<span class="t " style="top:511.5px;font-size:12px;color:#000;letter-spacing:-0.674px;right:284.7px;">2</span>
<div style="left:1640px;top:505px;width:80px;height:29px;background:#ffff9e;"></div>
<span class="t " style="top:511.5px;font-size:12px;color:#000;letter-spacing:-0.240px;right:203.2px;">2,00 mm</span>
<span class="t " style="top:511.5px;font-size:12px;color:#000;letter-spacing:-0.280px;left:1724.0px;">Wandstärke ...</span>
<div style="left:1812px;top:505px;width:59px;height:29px;background:#a8fd7e;"></div>
<span class="t " style="top:511.5px;font-size:12px;color:#000;letter-spacing:-0.674px;right:52.7px;">2</span>
<div style="left:1517px;top:534px;width:369px;height:1px;background:#d4d4d4;"></div>
<span class="t " style="top:542.5px;font-size:12px;color:#000;letter-spacing:-0.674px;left:1471.0px;">12</span>
<span class="t " style="top:541.5px;font-size:12px;color:#000;font-weight:700;letter-spacing:-0.115px;left:1724.0px;">Placement</span>
<div style="left:1517px;top:564px;width:369px;height:1px;background:#d4d4d4;"></div>
<span class="t " style="top:572.5px;font-size:12px;color:#000;letter-spacing:-0.674px;left:1471.0px;">13</span>
<span class="t " style="top:571.5px;font-size:12px;color:#000;letter-spacing:-0.113px;left:1520.0px;">pl_Winkel</span>
<div style="left:1587px;top:565px;width:52px;height:29px;background:#a8fd7e;"></div>
<span class="t " style="top:571.5px;font-size:12px;color:#000;letter-spacing:-0.674px;right:284.7px;">0</span>
<div style="left:1640px;top:565px;width:80px;height:29px;background:#ffff9e;"></div>
<span class="t " style="top:571.5px;font-size:12px;color:#000;letter-spacing:-0.581px;right:203.6px;">0,00 °</span>
<span class="t " style="top:571.5px;font-size:12px;color:#000;left:1724.0px;">Winkel</span>
<div style="left:1812px;top:565px;width:59px;height:29px;background:#a8fd7e;"></div>
<span class="t " style="top:571.5px;font-size:12px;color:#000;letter-spacing:-0.674px;right:52.7px;">0</span>
<div style="left:1517px;top:594px;width:369px;height:1px;background:#d4d4d4;"></div>
<span class="t " style="top:602.5px;font-size:12px;color:#000;letter-spacing:-0.674px;left:1471.0px;">14</span>
<span class="t " style="top:601.5px;font-size:12px;color:#000;letter-spacing:-0.571px;left:1520.0px;">pl_achse_x</span>
<div style="left:1587px;top:595px;width:52px;height:29px;background:#a8fd7e;"></div>
<span class="t " style="top:601.5px;font-size:12px;color:#000;letter-spacing:-0.674px;right:284.7px;">0</span>
<div style="left:1640px;top:595px;width:80px;height:29px;background:#ffff9e;"></div>
<span class="t " style="top:601.5px;font-size:12px;color:#000;letter-spacing:-0.674px;right:203.7px;">0</span>
<span class="t " style="top:601.5px;font-size:12px;color:#000;letter-spacing:0.050px;left:1724.0px;">um x-Achse []</span>
<div style="left:1812px;top:595px;width:59px;height:29px;background:#a8fd7e;"></div>
<span class="t " style="top:601.5px;font-size:12px;color:#000;letter-spacing:-0.674px;right:52.7px;">0</span>
<div style="left:1517px;top:624px;width:369px;height:1px;background:#d4d4d4;"></div>
<span class="t " style="top:632.5px;font-size:12px;color:#000;letter-spacing:-0.674px;left:1471.0px;">15</span>
<span class="t " style="top:631.5px;font-size:12px;color:#000;letter-spacing:-0.471px;left:1520.0px;">pl_achse_y</span>
<div style="left:1587px;top:625px;width:52px;height:29px;background:#a8fd7e;"></div>
<span class="t " style="top:631.5px;font-size:12px;color:#000;letter-spacing:-0.674px;right:284.7px;">0</span>
<div style="left:1640px;top:625px;width:80px;height:29px;background:#ffff9e;"></div>
<span class="t " style="top:631.5px;font-size:12px;color:#000;letter-spacing:-0.674px;right:203.7px;">0</span>
<span class="t " style="top:631.5px;font-size:12px;color:#000;letter-spacing:-0.035px;left:1724.0px;">um y-Achse</span>
<div style="left:1812px;top:625px;width:59px;height:29px;background:#a8fd7e;"></div>
<span class="t " style="top:631.5px;font-size:12px;color:#000;letter-spacing:-0.674px;right:52.7px;">0</span>
<div style="left:1517px;top:654px;width:369px;height:1px;background:#d4d4d4;"></div>
<span class="t " style="top:662.5px;font-size:12px;color:#000;letter-spacing:-0.674px;left:1471.0px;">16</span>
<span class="t " style="top:661.5px;font-size:12px;color:#000;letter-spacing:-0.571px;left:1520.0px;">pl_achse_z</span>
<div style="left:1587px;top:655px;width:52px;height:29px;background:#a8fd7e;"></div>
<span class="t " style="top:661.5px;font-size:12px;color:#000;letter-spacing:-0.674px;right:284.7px;">1</span>
<div style="left:1640px;top:655px;width:80px;height:29px;background:#ffff9e;"></div>
<span class="t " style="top:661.5px;font-size:12px;color:#000;letter-spacing:-0.674px;right:203.7px;">1</span>
<span class="t " style="top:661.5px;font-size:12px;color:#000;letter-spacing:-0.135px;left:1724.0px;">um z-Achse</span>
<div style="left:1812px;top:655px;width:59px;height:29px;background:#a8fd7e;"></div>
<span class="t " style="top:661.5px;font-size:12px;color:#000;letter-spacing:-0.674px;right:52.7px;">1</span>
<div style="left:1517px;top:684px;width:369px;height:1px;background:#d4d4d4;"></div>
<span class="t " style="top:692.5px;font-size:12px;color:#000;letter-spacing:-0.674px;left:1471.0px;">17</span>
<span class="t " style="top:691.5px;font-size:12px;color:#000;letter-spacing:-0.505px;left:1520.0px;">pl_pos_x</span>
<div style="left:1587px;top:685px;width:52px;height:29px;background:#a8fd7e;"></div>
<span class="t " style="top:691.5px;font-size:12px;color:#000;letter-spacing:-0.674px;right:284.7px;">0</span>
<div style="left:1640px;top:685px;width:80px;height:29px;background:#ffff9e;"></div>
<span class="t " style="top:691.5px;font-size:12px;color:#000;letter-spacing:-0.240px;right:203.2px;">0,00 mm</span>
<span class="t " style="top:691.5px;font-size:12px;color:#000;letter-spacing:0.074px;left:1724.0px;">in x-Richtung</span>
<div style="left:1812px;top:685px;width:59px;height:29px;background:#a8fd7e;"></div>
<span class="t " style="top:691.5px;font-size:12px;color:#000;letter-spacing:-0.674px;right:52.7px;">20</span>
<div style="left:1517px;top:714px;width:369px;height:1px;background:#d4d4d4;"></div>
<span class="t " style="top:722.5px;font-size:12px;color:#000;letter-spacing:-0.674px;left:1471.0px;">18</span>
<span class="t " style="top:721.5px;font-size:12px;color:#000;letter-spacing:-0.380px;left:1520.0px;">pl_pos_y</span>
<div style="left:1587px;top:715px;width:52px;height:29px;background:#a8fd7e;"></div>
<span class="t " style="top:721.5px;font-size:12px;color:#000;letter-spacing:-0.674px;right:284.7px;">0</span>
<div style="left:1640px;top:715px;width:80px;height:29px;background:#ffff9e;"></div>
<span class="t " style="top:721.5px;font-size:12px;color:#000;letter-spacing:-0.240px;right:203.2px;">0,00 mm</span>
<span class="t " style="top:721.5px;font-size:12px;color:#000;letter-spacing:0.074px;left:1724.0px;">in y-Richtung</span>
<div style="left:1812px;top:715px;width:59px;height:29px;background:#a8fd7e;"></div>
<span class="t " style="top:721.5px;font-size:12px;color:#000;letter-spacing:-0.674px;right:52.7px;">0</span>
<div style="left:1517px;top:744px;width:369px;height:1px;background:#d4d4d4;"></div>
<span class="t " style="top:752.5px;font-size:12px;color:#000;letter-spacing:-0.674px;left:1471.0px;">19</span>
<span class="t " style="top:751.5px;font-size:12px;color:#000;letter-spacing:-0.505px;left:1520.0px;">pl_pos_z</span>
<div style="left:1587px;top:745px;width:52px;height:29px;background:#a8fd7e;"></div>
<span class="t " style="top:751.5px;font-size:12px;color:#000;letter-spacing:-0.674px;right:284.7px;">0</span>
<div style="left:1640px;top:745px;width:80px;height:29px;background:#ffff9e;"></div>
<span class="t " style="top:751.5px;font-size:12px;color:#000;letter-spacing:-0.240px;right:203.2px;">0,00 mm</span>
<span class="t " style="top:751.5px;font-size:12px;color:#000;left:1724.0px;">in z-Richtung</span>
<div style="left:1812px;top:745px;width:59px;height:29px;background:#a8fd7e;"></div>
<span class="t " style="top:751.5px;font-size:12px;color:#000;letter-spacing:-0.115px;right:52.1px;">-50</span>
<div style="left:1517px;top:774px;width:369px;height:1px;background:#d4d4d4;"></div>
<span class="t " style="top:782.5px;font-size:12px;color:#000;letter-spacing:-0.674px;left:1471.0px;">20</span>
<div style="left:1517px;top:804px;width:369px;height:1px;background:#d4d4d4;"></div>
<span class="t " style="top:812.5px;font-size:12px;color:#000;letter-spacing:-0.674px;left:1471.0px;">21</span>
<div style="left:1517px;top:834px;width:369px;height:1px;background:#d4d4d4;"></div>
<span class="t " style="top:842.5px;font-size:12px;color:#000;letter-spacing:-0.674px;left:1471.0px;">22</span>
<div style="left:1517px;top:864px;width:369px;height:1px;background:#d4d4d4;"></div>
<span class="t " style="top:872.5px;font-size:12px;color:#000;letter-spacing:-0.674px;left:1471.0px;">23</span>
<div style="left:1517px;top:865px;width:69px;height:29px;background:#efefef;"></div>
<div style="left:1517px;top:894px;width:369px;height:1px;background:#d4d4d4;"></div>
<span class="t " style="top:902.5px;font-size:12px;color:#000;letter-spacing:-0.674px;left:1471.0px;">24</span>
<div style="left:1517px;top:924px;width:369px;height:1px;background:#d4d4d4;"></div>
<div style="left:1467px;top:925px;width:49px;height:19px;overflow:hidden;"><span class="t " style="top:7.5px;font-size:12px;color:#000;letter-spacing:-0.674px;left:4.0px;">25</span></div>
<div style="left:1886px;top:175px;width:16px;height:770px;background:#f0f0f0;"></div>
<div style="left:1893px;top:192px;width:2px;height:18px;background:#7f7f7f;border-radius:1px;"></div>
<div style="left:1467px;top:944px;width:435px;height:17px;background:#f0f0f0;"></div>
<div style="left:1484px;top:952px;width:18px;height:2px;background:#7f7f7f;border-radius:1px;"></div>
<svg width="0" height="0" style="left:0;top:0"><defs>
<linearGradient id="gPage" x1="0" y1="0" x2="1" y2="1"><stop offset="0" stop-color="#e9e9e9"/><stop offset="1" stop-color="#fbfbfb"/></linearGradient>
<linearGradient id="gBlue" x1="0" y1="0" x2="0" y2="1"><stop offset="0" stop-color="#7fb0e6"/><stop offset="1" stop-color="#3b6fb6"/></linearGradient>
<linearGradient id="gBlueH" x1="0" y1="0" x2="1" y2="0"><stop offset="0" stop-color="#7fb0e6"/><stop offset="1" stop-color="#2f5f9f"/></linearGradient>
<linearGradient id="gGray" x1="0" y1="0" x2="0" y2="1"><stop offset="0" stop-color="#e6e6e6"/><stop offset="1" stop-color="#9c9c9c"/></linearGradient>
<linearGradient id="gYel" x1="0" y1="0" x2="0" y2="1"><stop offset="0" stop-color="#fff06a"/><stop offset="1" stop-color="#e2b80f"/></linearGradient>
<linearGradient id="gTeal" x1="0" y1="0" x2="1" y2="1"><stop offset="0" stop-color="#3ee0e4"/><stop offset="1" stop-color="#12a7ad"/></linearGradient>
<radialGradient id="gShadow"><stop offset="0" stop-color="#000" stop-opacity="0.280"/><stop offset="1" stop-color="#000" stop-opacity="0"/></radialGradient>
</defs></svg>
<svg style="left:13px;top:49px" width="24" height="24" viewBox="0 0 24 24"><rect x="3.500" y="1.500" width="17" height="21" fill="url(#gPage)" stroke="#d3d3d3" stroke-width="0.800"/><path d="M3 22.600h18" stroke="#b9b9b9" stroke-width="1"/><circle cx="18" cy="5.500" r="2.600" fill="#fff" opacity="0.900"/></svg>
<svg style="left:44px;top:49px" width="24" height="24" viewBox="0 0 24 24"><path d="M1 3.500h8l1.500 2h10.500v14h-19z" fill="#8e8e8e" stroke="#5e5e5e" stroke-width="0.700"/><path d="M4.500 2.500h15v12h-15z" fill="#f4f4f4" stroke="#9a9a9a" stroke-width="0.600"/><path d="M6 4.500h12M6 6.500h12" stroke="#c4c4c4" stroke-width="0.700"/><path d="M5.500 9.500h19.500l-3.500 11.500h-19z" fill="url(#gBlue)" stroke="#2f5c9c" stroke-width="0.800"/></svg>
<svg style="left:75px;top:49px" width="24" height="24" viewBox="0 0 24 24"><path d="M4.500 9.500h15l3 8v4.500h-21v-4.500z" fill="url(#gGray)" stroke="#7a7a7a" stroke-width="0.800"/><path d="M1.500 17.500h21v4.500h-21z" fill="#a8a8a8" stroke="#7a7a7a" stroke-width="0.800"/><path d="M14 20h6" stroke="#d8d8d8" stroke-width="1.200"/><path d="M3.500 3.500c3 -3.500 9 -3 10.500 2.500v4h3.500l-5.500 6 -5.500 -6h3.500v-3c-1 -3 -4 -4 -6.500 -3.500z" fill="#4a80c6" stroke="#2c5a9a" stroke-width="0.600"/></svg>
<svg style="left:118px;top:49px" width="24" height="24" viewBox="0 0 24 24"><ellipse cx="12" cy="21.500" rx="9.500" ry="2.200" fill="url(#gShadow)"/><path d="M2.500 9.500l8.500 -7v4.500c6.500 0 9.500 4.500 8 9.500 -1 3 -3.500 4.500 -6.500 5 3 -2.500 3.500 -7.500 -1.500 -8v4.500z" fill="url(#gYel)" stroke="#c99a06" stroke-width="0.700" stroke-linejoin="round"/></svg>
<svg style="left:163px;top:49px" width="24" height="24" viewBox="0 0 24 24"><g transform="translate(24 0) scale(-1 1)" opacity="0.900"><ellipse cx="12" cy="21.500" rx="9.500" ry="2.200" fill="url(#gShadow)"/><path d="M2.500 9.500l8.500 -7v4.500c6.500 0 9.500 4.500 8 9.500 -1 3 -3.500 4.500 -6.500 5 3 -2.500 3.500 -7.500 -1.500 -8v4.500z" fill="url(#gGray)" stroke="#b5b5b5" stroke-width="0.700" stroke-linejoin="round"/></g></svg>
<svg style="left:210px;top:49px" width="24" height="24" viewBox="0 0 24 24"><g fill="url(#gBlue)" stroke="#2c5a9a" stroke-width="0.600" stroke-linejoin="round"><path d="M2.500 11c0 -6 5.500 -9.500 11 -8.500 2 0.400 3.500 1.200 5 2.800l3 -3.300v9.500h-9l3 -3.200c-2.500 -2.500 -8 -2 -8.500 2.700z"/><path d="M21.500 13c0 6 -5.500 9.500 -11 8.500 -2 -0.400 -3.500 -1.200 -5 -2.800l-3 3.300v-9.500h9l-3 3.200c2.500 2.500 8 2 8.500 -2.700z"/></g></svg>
<svg style="left:410px;top:49px" width="24" height="24" viewBox="0 0 24 24"><path d="M1.300 12.450H7V14.300H3.400V20.500H20.800V14.300H16.900V12.450H22.650V22.600H1.300z" fill="#fafafa" stroke="#4a4a4a" stroke-width="0.900" stroke-linejoin="round"/><path d="M1.300 23.300h21.400" stroke="#c9c9c9" stroke-width="0.800"/><path d="M12 1l6.500 6.800h-3.900v7.500h-5.200v-7.500h-3.900z" fill="url(#gBlue)" stroke="#274f88" stroke-width="0.800" stroke-linejoin="round"/></svg>
<svg style="left:441px;top:49px" width="24" height="24" viewBox="0 0 24 24"><rect x="2.500" y="1.500" width="18.500" height="20.500" fill="#fafafa" stroke="#8c8c8c" stroke-width="0.800"/><circle cx="15" cy="8.500" r="5" fill="none" stroke="#e31b1b" stroke-width="1.100"/><rect x="4.500" y="9.500" width="9.500" height="10" fill="#e6e6e6" stroke="#e31b1b" stroke-width="1.100"/><path d="M18.300 17.800l3.600 3.400" stroke="#0d8f96" stroke-width="2.600" stroke-linecap="round"/><path d="M18.300 17.800l3.600 3.400" stroke="#1fc3c9" stroke-width="1.100" stroke-linecap="round"/><circle cx="15.100" cy="14.500" r="4.500" fill="url(#gTeal)" stroke="#0d8f96" stroke-width="0.900"/></svg>
<svg style="left:472px;top:49px" width="24" height="24" viewBox="0 0 24 24"><path d="M2.500 2l14 4.500v16l-14 -3z" fill="#4f86cc" stroke="#1f4a88" stroke-width="0.900"/><path d="M16.500 6.500l4.500 -1v13.500l-4.500 3.500z" fill="#2f5f9f" stroke="#1f4a88" stroke-width="0.800"/><path d="M7 5.500l9 2.200v12l-9 -2z" fill="#3d6fb3" stroke="#1f4a88" stroke-width="0.600"/><circle cx="12" cy="10.500" r="3.600" fill="none" stroke="#e31b1b" stroke-width="1.100"/><rect x="6" y="11" width="6.500" height="7" fill="none" stroke="#e31b1b" stroke-width="1.100"/></svg>
<svg style="left:515px;top:49px" width="24" height="24" viewBox="0 0 24 24"><circle cx="12" cy="12.5" r="4" fill="#e31b1b" stroke="#8a0505" stroke-width="0.500"/></svg>
<svg style="left:546px;top:49px" width="24" height="24" viewBox="0 0 24 24"><path d="M3.600 20.400L20.500 3.500" fill="none" stroke="#3a3a3a" stroke-width="2.8" stroke-linecap="butt"/><path d="M3.600 20.400L20.500 3.500" fill="none" stroke="#fff" stroke-width="1.2999999999999998" stroke-linecap="butt"/><circle cx="3.6" cy="20.4" r="2.1" fill="#e31b1b" stroke="#8a0505" stroke-width="0.500"/><circle cx="20.5" cy="3.5" r="2.1" fill="#e31b1b" stroke="#8a0505" stroke-width="0.500"/></svg>
<svg style="left:577px;top:49px" width="24" height="24" viewBox="0 0 24 24"><path d="M5.100 5.200A13.500 13.500 0 0 1 18.900 18.700" fill="none" stroke="#3a3a3a" stroke-width="2.8" stroke-linecap="butt"/><path d="M5.100 5.200A13.500 13.500 0 0 1 18.900 18.700" fill="none" stroke="#fff" stroke-width="1.2999999999999998" stroke-linecap="butt"/><circle cx="5.1" cy="5.2" r="2.1" fill="#e31b1b" stroke="#8a0505" stroke-width="0.500"/><circle cx="18.9" cy="18.7" r="2.1" fill="#e31b1b" stroke="#8a0505" stroke-width="0.500"/><circle cx="5.1" cy="18.5" r="2.1" fill="#e31b1b" stroke="#8a0505" stroke-width="0.500"/></svg>
<svg style="left:620px;top:49px" width="24" height="24" viewBox="0 0 24 24"><path d="M11.250 2.600a9.300 9.300 0 1 0 0.010 0z" fill="none" stroke="#3a3a3a" stroke-width="3.2" stroke-linecap="butt"/><path d="M11.250 2.600a9.300 9.300 0 1 0 0.010 0z" fill="none" stroke="#fff" stroke-width="1.7000000000000002" stroke-linecap="butt"/><circle cx="11.25" cy="11.9" r="2.1" fill="#e31b1b" stroke="#8a0505" stroke-width="0.500"/><circle cx="20.4" cy="11.9" r="2.1" fill="#e31b1b" stroke="#8a0505" stroke-width="0.500"/></svg>
<svg style="left:663px;top:49px" width="24" height="24" viewBox="0 0 24 24"><path d="M12 1L20.300 19.500c-2 3.200 -14.600 3.200 -16.600 0z" fill="url(#gBlueH)" stroke="#2a5590" stroke-width="0.700"/><path d="M6 15.600C10.500 16.500 15 14.500 16.600 10.400" fill="none" stroke="#555" stroke-width="2.6" stroke-linecap="butt"/><path d="M6 15.600C10.500 16.500 15 14.500 16.600 10.400" fill="none" stroke="#fff" stroke-width="1.1" stroke-linecap="butt"/><circle cx="6" cy="15.6" r="2.1" fill="#e31b1b" stroke="#8a0505" stroke-width="0.500"/><circle cx="16.6" cy="10.4" r="2.1" fill="#e31b1b" stroke="#8a0505" stroke-width="0.500"/></svg>
<svg style="left:706px;top:49px" width="24" height="24" viewBox="0 0 24 24"><path d="M3.400 20.400C3.400 8 20.500 16 20.500 3.500" fill="none" stroke="#3a3a3a" stroke-width="2.8" stroke-linecap="butt"/><path d="M3.400 20.400C3.400 8 20.500 16 20.500 3.500" fill="none" stroke="#fff" stroke-width="1.2999999999999998" stroke-linecap="butt"/><circle cx="3.4" cy="20.4" r="2.1" fill="#e31b1b" stroke="#8a0505" stroke-width="0.500"/><circle cx="20.5" cy="3.5" r="2.1" fill="#e31b1b" stroke="#8a0505" stroke-width="0.500"/><circle cx="5.5" cy="6" r="2.1" fill="#e31b1b" stroke="#8a0505" stroke-width="0.500"/><circle cx="17.7" cy="18.5" r="2.1" fill="#e31b1b" stroke="#8a0505" stroke-width="0.500"/></svg>
<svg style="left:755px;top:49px" width="24" height="24" viewBox="0 0 24 24"><path d="M3.700 4.600C9 2.500 16 3 20.600 6.900L15.600 19.700L6.900 15.900" fill="none" stroke="#3a3a3a" stroke-width="2.8" stroke-linecap="butt"/><path d="M3.700 4.600C9 2.500 16 3 20.600 6.900L15.600 19.700L6.900 15.900" fill="none" stroke="#fff" stroke-width="1.2999999999999998" stroke-linecap="butt"/><circle cx="3.7" cy="4.6" r="2.1" fill="#e31b1b" stroke="#8a0505" stroke-width="0.500"/><circle cx="20.6" cy="6.9" r="2.1" fill="#e31b1b" stroke="#8a0505" stroke-width="0.500"/><circle cx="6.9" cy="15.9" r="2.1" fill="#e31b1b" stroke="#8a0505" stroke-width="0.500"/><circle cx="15.6" cy="19.7" r="2.1" fill="#e31b1b" stroke="#8a0505" stroke-width="0.500"/></svg>
<svg style="left:786px;top:49px" width="24" height="24" viewBox="0 0 24 24"><path d="M7.500 3.500h9a4 4 0 0 1 4 4v9a4 4 0 0 1 -4 4h-9a4 4 0 0 1 -4 -4v-9a4 4 0 0 1 4 -4z" fill="none" stroke="#3a3a3a" stroke-width="3.2" stroke-linecap="butt"/><path d="M7.500 3.500h9a4 4 0 0 1 4 4v9a4 4 0 0 1 -4 4h-9a4 4 0 0 1 -4 -4v-9a4 4 0 0 1 4 -4z" fill="none" stroke="#fff" stroke-width="1.7000000000000002" stroke-linecap="butt"/><circle cx="19.2" cy="4.8" r="2.1" fill="#e31b1b" stroke="#8a0505" stroke-width="0.500"/><circle cx="5" cy="18.7" r="2.1" fill="#e31b1b" stroke="#8a0505" stroke-width="0.500"/></svg>
<svg style="left:829px;top:49px" width="24" height="24" viewBox="0 0 24 24"><path d="M12 2.200l8.600 4.900v9.800l-8.600 4.900 -8.600 -4.900v-9.800z" fill="none" stroke="#3a3a3a" stroke-width="3.2" stroke-linecap="butt"/><path d="M12 2.200l8.600 4.900v9.800l-8.600 4.900 -8.600 -4.900v-9.800z" fill="none" stroke="#fff" stroke-width="1.7000000000000002" stroke-linecap="butt"/><circle cx="12" cy="11.9" r="2.1" fill="#e31b1b" stroke="#8a0505" stroke-width="0.500"/><circle cx="20.7" cy="7.2" r="2.1" fill="#e31b1b" stroke="#8a0505" stroke-width="0.500"/></svg>
<svg style="left:872px;top:49px" width="24" height="24" viewBox="0 0 24 24"><path d="M8.600 5.700h6.800a6.100 6.100 0 0 1 0 12.200h-6.800a6.100 6.100 0 0 1 0 -12.200z" fill="none" stroke="#3a3a3a" stroke-width="3.0" stroke-linecap="butt"/><path d="M8.600 5.700h6.800a6.100 6.100 0 0 1 0 12.200h-6.800a6.100 6.100 0 0 1 0 -12.200z" fill="none" stroke="#fff" stroke-width="1.5" stroke-linecap="butt"/><circle cx="7.4" cy="11.9" r="2.1" fill="#e31b1b" stroke="#8a0505" stroke-width="0.500"/><circle cx="16.7" cy="11.9" r="2.1" fill="#e31b1b" stroke="#8a0505" stroke-width="0.500"/></svg>
<svg style="left:921px;top:49px" width="24" height="24" viewBox="0 0 24 24"><path d="M4.400 1v6.900A11.500 11.500 0 0 0 15.900 19.400H22.300" fill="none" stroke="#3a3a3a" stroke-width="2.8" stroke-linecap="butt"/><path d="M4.400 1v6.900A11.500 11.500 0 0 0 15.900 19.400H22.300" fill="none" stroke="#fff" stroke-width="1.2999999999999998" stroke-linecap="butt"/><circle cx="4.4" cy="7.9" r="2.1" fill="#e31b1b" stroke="#8a0505" stroke-width="0.500"/><circle cx="4.4" cy="19.4" r="2.1" fill="#e31b1b" stroke="#8a0505" stroke-width="0.500"/><circle cx="15.9" cy="19.4" r="2.1" fill="#e31b1b" stroke="#8a0505" stroke-width="0.500"/></svg>
<svg style="left:964px;top:49px" width="24" height="24" viewBox="0 0 24 24"><path d="M14.700 1.200L6 21.900" fill="none" stroke="#3a3a3a" stroke-width="2.8" stroke-linecap="butt"/><path d="M14.700 1.200L6 21.900" fill="none" stroke="#fff" stroke-width="1.2999999999999998" stroke-linecap="butt"/><path d="M10.700 11L21.600 21.900" fill="none" stroke="#3a3a3a" stroke-width="2.8" stroke-linecap="butt"/><path d="M10.700 11L21.600 21.900" fill="none" stroke="#fff" stroke-width="1.2999999999999998" stroke-linecap="butt"/><path d="M1.600 1.500L10.700 11" stroke="#3a3a3a" stroke-width="2.200" stroke-dasharray="2 2"/><path d="M1.600 1.500L10.700 11" stroke="#fff" stroke-width="0.800" stroke-dasharray="2 2"/><circle cx="10.7" cy="11" r="2.1" fill="#e31b1b" stroke="#8a0505" stroke-width="0.500"/></svg>
<svg style="left:1007px;top:49px" width="24" height="24" viewBox="0 0 24 24"><path d="M7.700 3.500h13" stroke="#3b6fb6" stroke-width="2.400"/><path d="M13.800 4v4.500l-1.500 2.500" stroke="#3b6fb6" stroke-width="2.600" fill="none"/><path d="M0.800 14.800l5.500 -3.500h15l-5 3.500z" fill="#7fb0e6" stroke="#1f4a88" stroke-width="0.700"/><path d="M0.800 14.800h15.500v7.500h-15.500z" fill="#3b78c4" stroke="#1f4a88" stroke-width="0.700"/><path d="M16.300 14.800l5 -3.500v7l-5 4z" fill="#2f5f9f" stroke="#1f4a88" stroke-width="0.700"/><circle cx="7.7" cy="3.5" r="2.1" fill="#e31b1b" stroke="#8a0505" stroke-width="0.500"/><circle cx="20.7" cy="3.5" r="2.1" fill="#e31b1b" stroke="#8a0505" stroke-width="0.500"/></svg>
<svg style="left:1038px;top:49px" width="24" height="24" viewBox="0 0 24 24"><rect x="4.500" y="6.500" width="13" height="13" rx="1.500" fill="none" stroke="#3a9418" stroke-width="2.400" stroke-dasharray="3 0.700"/><circle cx="16" cy="7.500" r="6" fill="none" stroke="#3a9418" stroke-width="2.400" stroke-dasharray="3 0.700"/><circle cx="13.800" cy="8.800" r="5.800" fill="none" stroke="#8f8f8f" stroke-width="2.400"/><circle cx="13.800" cy="8.800" r="5.800" fill="none" stroke="#f2f2f2" stroke-width="1"/><rect x="1.500" y="10.500" width="12" height="12" rx="1.500" fill="none" stroke="#8f8f8f" stroke-width="2.400"/><rect x="1.500" y="10.500" width="12" height="12" rx="1.500" fill="none" stroke="#f2f2f2" stroke-width="1"/></svg>
<svg style="left:1069px;top:49px" width="24" height="24" viewBox="0 0 24 24"><path d="M0.800 4.300L2.800 2.200L22 21.300L20 23.400z" fill="#fff" stroke="#3f3f3f" stroke-width="0.900"/><path d="M9.500 1.500L22.500 14.400" stroke="#1f4a88" stroke-width="2.800" stroke-dasharray="3.400 1.500"/><path d="M9.500 1.500L22.500 14.400" stroke="#4a82c8" stroke-width="1.400" stroke-dasharray="3.400 1.500"/></svg>
<svg style="left:1112px;top:49px" width="24" height="24" viewBox="0 0 24 24"><g stroke="#1c1c1c" stroke-width="1.300" stroke-dasharray="2.200 1.400" stroke-dashoffset="1.200" fill="none"><path d="M1 4.900h22.300M1 11.900h22.300M1 19.400h22.300M4.500 1v22.300M11.700 1v22.300M19.100 1v22.300"/></g></svg>
<svg style="left:1155px;top:49px" width="24" height="24" viewBox="0 0 24 24"><g stroke="#1c1c1c" stroke-width="1.300" stroke-dasharray="2.200 1.400" stroke-dashoffset="1.200" fill="none"><path d="M1 11.900h22M1 19.400h22M11.700 1v22M19.100 1v22"/></g><g stroke="#2eea2e" stroke-width="1.400" stroke-dasharray="2.200 1.400" stroke-dashoffset="1.200"><path d="M1 4.200h22M4.500 1v22"/></g><path d="M7.300 8.100L15.400 4.200" stroke="#4fb52a" stroke-width="2.400"/><path d="M9 9.500l12 7 -4.500 0.800 3 4.200 -1.800 1.200 -3 -4.300 -3 3.100z" fill="#c9c9c9" stroke="#9a9a9a" stroke-width="0.600"/><circle cx="7.3" cy="8.1" r="1.9" fill="#e31b1b" stroke="#8a0505" stroke-width="0.500"/><circle cx="15.4" cy="4.2" r="1.9" fill="#e31b1b" stroke="#8a0505" stroke-width="0.500"/></svg>
<svg style="left:1198px;top:49px" width="24" height="24" viewBox="0 0 24 24"><circle cx="15.500" cy="9.200" r="7" fill="none" stroke="#8c8c8c" stroke-width="2.800"/><circle cx="15.500" cy="9.200" r="7" fill="none" stroke="#f4f4f4" stroke-width="1.100"/><rect x="2.500" y="8.500" width="13.500" height="13.500" rx="2" fill="none" stroke="#8c8c8c" stroke-width="2.800"/><rect x="2.500" y="8.500" width="13.500" height="13.500" rx="2" fill="none" stroke="#f4f4f4" stroke-width="1.100"/><path d="M9 9.500a7 7 0 0 0 6.500 6.500" fill="none" stroke="#8c8c8c" stroke-width="2.800"/><path d="M9 9.500a7 7 0 0 0 6.500 6.500" fill="none" stroke="#f4f4f4" stroke-width="1.100"/></svg>
<svg style="left:1253px;top:49px" width="24" height="24" viewBox="0 0 24 24"><circle cx="17.500" cy="4.800" r="4" fill="#fdeaea" stroke="#d21b1b" stroke-width="0.800"/><rect x="11.500" y="4" width="7.500" height="7.500" rx="1" fill="#d21b1b"/><path d="M13.500 6l3.500 3.500M13.500 9.500v-3.500h3.500" stroke="#fff" stroke-width="1" fill="none"/><circle cx="8.500" cy="14" r="4" fill="#d21b1b"/><rect x="1.500" y="14.500" width="7.500" height="7.500" rx="1" fill="#fdeaea" stroke="#d21b1b" stroke-width="1"/><path d="M3.500 20v-3.500h3.500" stroke="#d21b1b" stroke-width="1" fill="none"/><path d="M3.800 7c0.500 -2 2 -3 4 -3M6.500 2.800l1.500 1.200 -1.500 1.500" stroke="#8c8c8c" stroke-width="1.300" fill="none"/><path d="M18 16c-0.500 2 -2 3 -4 3M15.500 20.300l-1.500 -1.200 1.500 -1.500" stroke="#8c8c8c" stroke-width="1.300" fill="none"/></svg>
<svg style="left:1284px;top:49px" width="24" height="24" viewBox="0 0 24 24"><path d="M5.600 5.800L20.500 3.400L17.800 18.700L3.500 20z" fill="#f4f4f4" stroke="#1f6a0f" stroke-width="2.900" stroke-linejoin="round"/><path d="M5.600 5.800L20.500 3.400L17.800 18.700L3.500 20z" fill="none" stroke="#6fc93a" stroke-width="1.500" stroke-linejoin="round"/><path d="M9.300 14.800L14.800 8.800" stroke="#333" stroke-width="5.400" stroke-linecap="round"/><path d="M9.300 14.800L14.800 8.800" stroke="#fff" stroke-width="4.200" stroke-linecap="round"/><path d="M9.300 14.800L14.800 8.800" stroke="#333" stroke-width="2.600" stroke-linecap="round"/><path d="M9.300 14.800L14.800 8.800" stroke="#fff" stroke-width="1.400" stroke-linecap="round"/><circle cx="5.6" cy="5.8" r="2.1" fill="#e31b1b" stroke="#8a0505" stroke-width="0.500"/><circle cx="20.5" cy="3.4" r="2.1" fill="#e31b1b" stroke="#8a0505" stroke-width="0.500"/><circle cx="3.5" cy="20" r="2.1" fill="#e31b1b" stroke="#8a0505" stroke-width="0.500"/><circle cx="17.8" cy="18.7" r="2.1" fill="#e31b1b" stroke="#8a0505" stroke-width="0.500"/></svg>
<svg style="left:1327px;top:49px" width="24" height="24" viewBox="0 0 24 24"><circle cx="11.300" cy="12.600" r="8.800" fill="none" stroke="#1f6a0f" stroke-width="2.800"/><circle cx="11.300" cy="12.600" r="8.800" fill="none" stroke="#6fc93a" stroke-width="1.500"/><path d="M11.300 3.800A8.800 8.800 0 0 1 20.100 12.600" fill="none" stroke="#444" stroke-width="2.800"/><path d="M11.300 3.800A8.800 8.800 0 0 1 20.100 12.600" fill="none" stroke="#f4f4f4" stroke-width="1.500"/><circle cx="11.3" cy="3.8" r="2.1" fill="#e31b1b" stroke="#8a0505" stroke-width="0.500"/><circle cx="20.4" cy="12.6" r="2.1" fill="#e31b1b" stroke="#8a0505" stroke-width="0.500"/></svg>
<svg style="left:13px;top:83px" width="24" height="24" viewBox="0 0 24 24"><path d="M3.500 1.500h17v21h-14l-3 -3z" fill="#eef0ea" stroke="#6a6a6a" stroke-width="0.800"/><path d="M3.500 19.500h3v3" fill="#d0d0d0" stroke="#6a6a6a" stroke-width="0.600"/><path d="M12.500 13l6 6" stroke="#0b8c92" stroke-width="3.200" stroke-linecap="round"/><path d="M12.500 13l6 6" stroke="#1fcfd5" stroke-width="1.600" stroke-linecap="round"/><circle cx="10" cy="9.500" r="5" fill="url(#gTeal)" stroke="#0b8c92" stroke-width="1"/></svg>
<svg style="left:44px;top:83px" width="24" height="24" viewBox="0 0 24 24"><path d="M14 14l7 7" stroke="#0b8c92" stroke-width="3.600" stroke-linecap="round"/><path d="M14 14l7 7" stroke="#1fcfd5" stroke-width="1.800" stroke-linecap="round"/><circle cx="9" cy="8.800" r="7.200" fill="url(#gTeal)" stroke="#0b8c92" stroke-width="1.200"/><path d="M4.500 13.500l5.500 -5.500 -1.800 -1.800 6 -1 -1 6 -1.800 -1.800 -5.500 5.500z" fill="#f4f4f4" stroke="#555" stroke-width="0.700"/></svg>
<svg style="left:75px;top:83px" width="24" height="24" viewBox="0 0 24 24"><path d="M11.800 1.400l10.400 5.200v11l-10.400 5 -10.300 -5v-11z" fill="#fff"/><g fill="none" stroke="#0b8c92" stroke-width="2.100" stroke-linejoin="round"><path d="M11.800 1.400l10.400 5.200v11l-10.400 5 -10.300 -5v-11z"/><path d="M1.500 17.600l10.300 -5.800 10.400 5.800M11.800 1.400v10.400"/><path d="M11.800 11.800v10.800" stroke-width="1.400"/></g><g fill="none" stroke="#1fcfd5" stroke-width="0.800"><path d="M11.800 1.400l10.400 5.200v11l-10.400 5 -10.300 -5v-11z"/><path d="M1.500 17.600l10.300 -5.800 10.400 5.800M11.800 1.400v10.400"/></g><path d="M5.500 17.500l2.500 -1.200M15.500 16.300l2.500 1.200" stroke="#0b8c92" stroke-width="1.800" stroke-linecap="round"/></svg>
<svg style="left:106px;top:83px" width="24" height="24" viewBox="0 0 24 24"><path d="M1.4 6.5 L9.7 1.5 L22.5 2.5 L22.5 16.3 L16.5 22.3 L1.4 20.4z" fill="#fff"/><path d="M9.7 1.5 L22.5 2.5 L22.5 16.3 L9.7 15.3z" fill="none" stroke="#0b8c92" stroke-width="1.7" stroke-linejoin="round"/><path d="M9.7 1.5 L22.5 2.5 L22.5 16.3 L9.7 15.3z" fill="none" stroke="#1fcfd5" stroke-width="0.6" stroke-linejoin="round"/><path d="M1.4 6.5L9.7 1.5M16.5 8.2L22.5 2.5M16.5 22.3L22.5 16.3M1.4 20.4L9.7 15.3" fill="none" stroke="#0b8c92" stroke-width="1.9" stroke-linejoin="round"/><path d="M1.4 6.5L9.7 1.5M16.5 8.2L22.5 2.5M16.5 22.3L22.5 16.3M1.4 20.4L9.7 15.3" fill="none" stroke="#1fcfd5" stroke-width="0.7" stroke-linejoin="round"/><path d="M1.4 6.5 L16.5 8.2 L16.5 22.3 L1.4 20.4z" fill="url(#gTeal)" stroke="none"/><path d="M1.4 6.5 L16.5 8.2 L16.5 22.3 L1.4 20.4z" fill="none" stroke="#0b8c92" stroke-width="1.9" stroke-linejoin="round"/><path d="M1.4 6.5 L16.5 8.2 L16.5 22.3 L1.4 20.4z" fill="none" stroke="#1fcfd5" stroke-width="0.7" stroke-linejoin="round"/></svg>
<svg style="left:137px;top:83px" width="24" height="24" viewBox="0 0 24 24"><path d="M1.4 6.5 L9.7 1.5 L22.5 2.5 L22.5 16.3 L16.5 22.3 L1.4 20.4z" fill="#fff"/><path d="M9.7 1.5 L22.5 2.5 L22.5 16.3 L9.7 15.3z" fill="none" stroke="#0b8c92" stroke-width="1.7" stroke-linejoin="round"/><path d="M9.7 1.5 L22.5 2.5 L22.5 16.3 L9.7 15.3z" fill="none" stroke="#1fcfd5" stroke-width="0.6" stroke-linejoin="round"/><path d="M1.4 6.5L9.7 1.5M16.5 8.2L22.5 2.5M16.5 22.3L22.5 16.3M1.4 20.4L9.7 15.3" fill="none" stroke="#0b8c92" stroke-width="1.9" stroke-linejoin="round"/><path d="M1.4 6.5L9.7 1.5M16.5 8.2L22.5 2.5M16.5 22.3L22.5 16.3M1.4 20.4L9.7 15.3" fill="none" stroke="#1fcfd5" stroke-width="0.7" stroke-linejoin="round"/><path d="M1.4 6.5 L16.5 8.2 L22.5 2.5 L9.7 1.5z" fill="url(#gTeal)" stroke="none"/><path d="M1.4 6.5 L16.5 8.2 L16.5 22.3 L1.4 20.4z" fill="none" stroke="#0b8c92" stroke-width="1.9" stroke-linejoin="round"/><path d="M1.4 6.5 L16.5 8.2 L16.5 22.3 L1.4 20.4z" fill="none" stroke="#1fcfd5" stroke-width="0.7" stroke-linejoin="round"/><path d="M5 18.500l2 -1.500M12.500 15.200h2M10.800 11v-2" stroke="#0b8c92" stroke-width="1.700" stroke-linecap="round"/></svg>
<svg style="left:168px;top:83px" width="24" height="24" viewBox="0 0 24 24"><path d="M1.4 6.5 L9.7 1.5 L22.5 2.5 L22.5 16.3 L16.5 22.3 L1.4 20.4z" fill="#fff"/><path d="M9.7 1.5 L22.5 2.5 L22.5 16.3 L9.7 15.3z" fill="none" stroke="#0b8c92" stroke-width="1.7" stroke-linejoin="round"/><path d="M9.7 1.5 L22.5 2.5 L22.5 16.3 L9.7 15.3z" fill="none" stroke="#1fcfd5" stroke-width="0.6" stroke-linejoin="round"/><path d="M1.4 6.5L9.7 1.5M16.5 8.2L22.5 2.5M16.5 22.3L22.5 16.3M1.4 20.4L9.7 15.3" fill="none" stroke="#0b8c92" stroke-width="1.9" stroke-linejoin="round"/><path d="M1.4 6.5L9.7 1.5M16.5 8.2L22.5 2.5M16.5 22.3L22.5 16.3M1.4 20.4L9.7 15.3" fill="none" stroke="#1fcfd5" stroke-width="0.7" stroke-linejoin="round"/><path d="M16.5 8.2 L22.5 2.5 L22.5 16.3 L16.5 22.3z" fill="url(#gTeal)" stroke="none"/><path d="M1.4 6.5 L16.5 8.2 L16.5 22.3 L1.4 20.4z" fill="none" stroke="#0b8c92" stroke-width="1.9" stroke-linejoin="round"/><path d="M1.4 6.5 L16.5 8.2 L16.5 22.3 L1.4 20.4z" fill="none" stroke="#1fcfd5" stroke-width="0.7" stroke-linejoin="round"/><path d="M5 18.500l2 -1.500M12.500 15.200h2M10.800 11v-2" stroke="#0b8c92" stroke-width="1.700" stroke-linecap="round"/></svg>
<svg style="left:199px;top:83px" width="24" height="24" viewBox="0 0 24 24"><path d="M1.4 6.5 L9.7 1.5 L22.5 2.5 L22.5 16.3 L16.5 22.3 L1.4 20.4z" fill="#fff"/><path d="M9.7 1.5 L22.5 2.5 L22.5 16.3 L9.7 15.3z" fill="url(#gTeal)" stroke="none"/><path d="M9.7 1.5 L22.5 2.5 L22.5 16.3 L9.7 15.3z" fill="none" stroke="#0b8c92" stroke-width="1.7" stroke-linejoin="round"/><path d="M9.7 1.5 L22.5 2.5 L22.5 16.3 L9.7 15.3z" fill="none" stroke="#1fcfd5" stroke-width="0.6" stroke-linejoin="round"/><path d="M1.4 6.5L9.7 1.5M16.5 8.2L22.5 2.5M16.5 22.3L22.5 16.3M1.4 20.4L9.7 15.3" fill="none" stroke="#0b8c92" stroke-width="1.9" stroke-linejoin="round"/><path d="M1.4 6.5L9.7 1.5M16.5 8.2L22.5 2.5M16.5 22.3L22.5 16.3M1.4 20.4L9.7 15.3" fill="none" stroke="#1fcfd5" stroke-width="0.7" stroke-linejoin="round"/><path d="M1.4 6.5 L16.5 8.2 L16.5 22.3 L1.4 20.4z" fill="none" stroke="#0b8c92" stroke-width="1.9" stroke-linejoin="round"/><path d="M1.4 6.5 L16.5 8.2 L16.5 22.3 L1.4 20.4z" fill="none" stroke="#1fcfd5" stroke-width="0.7" stroke-linejoin="round"/><path d="M5 18.500l2 -1.500M12.500 15.200h2M10.800 11v-2" stroke="#0b8c92" stroke-width="1.700" stroke-linecap="round"/></svg>
<svg style="left:230px;top:83px" width="24" height="24" viewBox="0 0 24 24"><path d="M1.4 6.5 L9.7 1.5 L22.5 2.5 L22.5 16.3 L16.5 22.3 L1.4 20.4z" fill="#fff"/><path d="M1.4 20.4 L16.5 22.3 L22.5 16.3 L9.7 15.3z" fill="url(#gTeal)" stroke="none"/><path d="M9.7 1.5 L22.5 2.5 L22.5 16.3 L9.7 15.3z" fill="none" stroke="#0b8c92" stroke-width="1.7" stroke-linejoin="round"/><path d="M9.7 1.5 L22.5 2.5 L22.5 16.3 L9.7 15.3z" fill="none" stroke="#1fcfd5" stroke-width="0.6" stroke-linejoin="round"/><path d="M1.4 6.5L9.7 1.5M16.5 8.2L22.5 2.5M16.5 22.3L22.5 16.3M1.4 20.4L9.7 15.3" fill="none" stroke="#0b8c92" stroke-width="1.9" stroke-linejoin="round"/><path d="M1.4 6.5L9.7 1.5M16.5 8.2L22.5 2.5M16.5 22.3L22.5 16.3M1.4 20.4L9.7 15.3" fill="none" stroke="#1fcfd5" stroke-width="0.7" stroke-linejoin="round"/><path d="M1.4 6.5 L16.5 8.2 L16.5 22.3 L1.4 20.4z" fill="none" stroke="#0b8c92" stroke-width="1.9" stroke-linejoin="round"/><path d="M1.4 6.5 L16.5 8.2 L16.5 22.3 L1.4 20.4z" fill="none" stroke="#1fcfd5" stroke-width="0.7" stroke-linejoin="round"/><path d="M5 18.500l2 -1.500M12.500 15.200h2M10.800 11v-2" stroke="#0b8c92" stroke-width="1.700" stroke-linecap="round"/></svg>
<svg style="left:261px;top:83px" width="24" height="24" viewBox="0 0 24 24"><path d="M1.4 6.5 L9.7 1.5 L22.5 2.5 L22.5 16.3 L16.5 22.3 L1.4 20.4z" fill="#fff"/><path d="M1.4 6.5 L9.7 1.5 L9.7 15.3 L1.4 20.4z" fill="url(#gTeal)" stroke="none"/><path d="M9.7 1.5 L22.5 2.5 L22.5 16.3 L9.7 15.3z" fill="none" stroke="#0b8c92" stroke-width="1.7" stroke-linejoin="round"/><path d="M9.7 1.5 L22.5 2.5 L22.5 16.3 L9.7 15.3z" fill="none" stroke="#1fcfd5" stroke-width="0.6" stroke-linejoin="round"/><path d="M1.4 6.5L9.7 1.5M16.5 8.2L22.5 2.5M16.5 22.3L22.5 16.3M1.4 20.4L9.7 15.3" fill="none" stroke="#0b8c92" stroke-width="1.9" stroke-linejoin="round"/><path d="M1.4 6.5L9.7 1.5M16.5 8.2L22.5 2.5M16.5 22.3L22.5 16.3M1.4 20.4L9.7 15.3" fill="none" stroke="#1fcfd5" stroke-width="0.7" stroke-linejoin="round"/><path d="M1.4 6.5 L16.5 8.2 L16.5 22.3 L1.4 20.4z" fill="none" stroke="#0b8c92" stroke-width="1.9" stroke-linejoin="round"/><path d="M1.4 6.5 L16.5 8.2 L16.5 22.3 L1.4 20.4z" fill="none" stroke="#1fcfd5" stroke-width="0.7" stroke-linejoin="round"/><path d="M5 18.500l2 -1.500M12.500 15.200h2M10.800 11v-2" stroke="#0b8c92" stroke-width="1.700" stroke-linecap="round"/></svg>
<svg style="left:298px;top:83px" width="24" height="24" viewBox="0 0 24 24"><path d="M12 1l9.800 5.500v11l-9.800 5.500 -9.800 -5.500v-11z" fill="url(#gTeal)" stroke="#0b8c92" stroke-width="1.200"/><circle cx="12" cy="12" r="7.300" fill="none" stroke="#8a0505" stroke-width="3.200"/><path d="M6.800 6.800l10.400 10.400" stroke="#8a0505" stroke-width="3.200"/><circle cx="12" cy="12" r="7.300" fill="none" stroke="#e31b1b" stroke-width="2"/><path d="M6.800 6.800l10.400 10.400" stroke="#e31b1b" stroke-width="2"/></svg>
<svg style="left:341px;top:83px" width="24" height="24" viewBox="0 0 24 24"><path d="M14.500 14.500l7 6.500" stroke="#0b8c92" stroke-width="3.800" stroke-linecap="round"/><path d="M14.500 14.500l7 6.500" stroke="#1fcfd5" stroke-width="1.900" stroke-linecap="round"/><circle cx="9" cy="8.800" r="6.800" fill="#8fe6ea" stroke="#0b8c92" stroke-width="2.600"/><circle cx="9" cy="8.800" r="6.800" fill="none" stroke="#1fcfd5" stroke-width="1.100"/><path d="M5.300 8a3.800 3.800 0 0 1 6.500 -1.800l1 -1v3.300h-3.300l1 -1a2 2 0 0 0 -3.200 0.800zM12.700 9.800a3.800 3.800 0 0 1 -6.500 1.800l-1 1v-3.300h3.300l-1 1a2 2 0 0 0 3.200 -0.800z" fill="#11a0a6" stroke="#0b8c92" stroke-width="0.400"/></svg>
<svg style="left:390px;top:83px" width="24" height="24" viewBox="0 0 24 24"><path d="M1.900 4.800L6.900 1L19.400 13.800L14.400 17.500z" fill="#bdbdbd" stroke="#a6a6a6" stroke-width="0.500"/><path d="M14.400 17.500L19.400 13.800V18.800L15 22z" fill="#9d9d9d"/><path d="M8 2.600l-1.800 1.400M10 4.700l-2.600 2M12 6.800l-1.800 1.400M14 8.900l-2.600 2M16 11l-1.800 1.400M18 13l-2.600 2" stroke="#8c8c8c" stroke-width="0.800"/></svg>
<svg style="left:421px;top:83px" width="24" height="24" viewBox="0 0 24 24"><path d="M1.300 10.500h3.500v2h14.400v-2h3.500v3.500l-6.700 4v4.700h-8v-4.700l-6.700 -4z" fill="#f47c7c" stroke="#7a1a1a" stroke-width="0.900" stroke-linejoin="round"/><path d="M5.500 3.500l8 -2.700 5.500 1.700v8l-7.500 2 -6 -2z" fill="#bfeef0" stroke="#0b8c92" stroke-width="0.800"/><path d="M5.500 3.500l6 1.800 7.500 -2.800M11.500 5.300v7.200M8.500 2.500v7.500l-3 0.500M8.500 10l10.500 0.300" fill="none" stroke="#0b8c92" stroke-width="0.700"/></svg>
<svg style="left:476px;top:83px" width="24" height="24" viewBox="0 0 24 24"><path d="M1.500 1.800L7 7M22.300 1.800L16.800 7M1.500 22L7 16.800M22.300 22L16.800 16.800" fill="none" stroke="#8a0505" stroke-width="3" stroke-linecap="round" stroke-linejoin="round"/><path d="M1.500 1.800L7 7M22.300 1.800L16.800 7M1.500 22L7 16.800M22.300 22L16.800 16.800" fill="none" stroke="#e31b1b" stroke-width="1.8" stroke-linecap="round" stroke-linejoin="round"/><circle cx="11.9" cy="11.9" r="3.4" fill="#e31b1b" stroke="#8a0505" stroke-width="0.500"/></svg>
<svg style="left:507px;top:83px" width="24" height="24" viewBox="0 0 24 24"><path d="M4 21.500C1.500 11 9 1 22 3.500" fill="none" stroke="#8a0505" stroke-width="3" stroke-linecap="round" stroke-linejoin="round"/><path d="M4 21.500C1.500 11 9 1 22 3.500" fill="none" stroke="#e31b1b" stroke-width="1.8" stroke-linecap="round" stroke-linejoin="round"/><circle cx="6.8" cy="6.9" r="2.9" fill="#e31b1b" stroke="#8a0505" stroke-width="0.500"/></svg>
<svg style="left:538px;top:83px" width="24" height="24" viewBox="0 0 24 24"><path d="M8.200 1.800V22M1.900 15H22" fill="none" stroke="#8a0505" stroke-width="3" stroke-linecap="round" stroke-linejoin="round"/><path d="M8.200 1.800V22M1.900 15H22" fill="none" stroke="#e31b1b" stroke-width="1.8" stroke-linecap="round" stroke-linejoin="round"/><path d="M3.900 5.500V9.500M13.500 10.900H19" fill="none" stroke="#8a0505" stroke-width="2.6" stroke-linecap="round" stroke-linejoin="round"/><path d="M3.900 5.500V9.500M13.500 10.900H19" fill="none" stroke="#e31b1b" stroke-width="1.4000000000000001" stroke-linecap="round" stroke-linejoin="round"/></svg>
<svg style="left:581px;top:83px" width="24" height="24" viewBox="0 0 24 24"><path d="M1.800 18.500L15.600 5M8 19.200L22.200 5.300" fill="none" stroke="#8a0505" stroke-width="3" stroke-linecap="round" stroke-linejoin="round"/><path d="M1.800 18.500L15.600 5M8 19.200L22.200 5.300" fill="none" stroke="#e31b1b" stroke-width="1.8" stroke-linecap="round" stroke-linejoin="round"/></svg>
<svg style="left:612px;top:83px" width="24" height="24" viewBox="0 0 24 24"><path d="M2 7.200L16.500 21.600M20.800 4L10 15" fill="none" stroke="#8a0505" stroke-width="3" stroke-linecap="round" stroke-linejoin="round"/><path d="M2 7.200L16.500 21.600M20.800 4L10 15" fill="none" stroke="#e31b1b" stroke-width="1.8" stroke-linecap="round" stroke-linejoin="round"/></svg>
<svg style="left:643px;top:83px" width="24" height="24" viewBox="0 0 24 24"><path d="M1.800 8.300C9 8 14.500 13 15.600 21.500" fill="none" stroke="#8a0505" stroke-width="2.8" stroke-linecap="round" stroke-linejoin="round"/><path d="M1.800 8.300C9 8 14.500 13 15.600 21.500" fill="none" stroke="#e31b1b" stroke-width="1.5999999999999999" stroke-linecap="round" stroke-linejoin="round"/><path d="M5.300 2.200L21.800 18.500" fill="none" stroke="#8a0505" stroke-width="3.2" stroke-linecap="round" stroke-linejoin="round"/><path d="M5.300 2.200L21.800 18.500" fill="none" stroke="#e31b1b" stroke-width="2.0" stroke-linecap="round" stroke-linejoin="round"/></svg>
<svg style="left:674.5px;top:83px" width="24" height="24" viewBox="0 0 24 24"><path d="M6.200 9H17M6.200 14.400H17" fill="none" stroke="#8a0505" stroke-width="3.2" stroke-linecap="butt" stroke-linejoin="round"/><path d="M6.200 9H17M6.200 14.400H17" fill="none" stroke="#e31b1b" stroke-width="2.0" stroke-linecap="butt" stroke-linejoin="round"/></svg>
<svg style="left:705.5px;top:83px" width="24" height="24" viewBox="0 0 24 24"><path d="M2.300 6.500L9.300 11.900L2.300 17.800M20.500 6.500L13.900 11.900L20.500 17.800" fill="none" stroke="#8a0505" stroke-width="3.2" stroke-linecap="round" stroke-linejoin="round"/><path d="M2.300 6.500L9.300 11.900L2.300 17.800M20.500 6.500L13.900 11.900L20.500 17.800" fill="none" stroke="#e31b1b" stroke-width="2.0" stroke-linecap="round" stroke-linejoin="round"/></svg>
<svg style="left:736.5px;top:83px" width="24" height="24" viewBox="0 0 24 24"><circle cx="11.400" cy="11.900" r="7.300" fill="#f4dada" stroke="#8a0505" stroke-width="3.200"/><circle cx="11.400" cy="11.900" r="7.300" fill="none" stroke="#e31b1b" stroke-width="2"/><path d="M6.800 7.300L16 16.500M16 7.300L6.800 16.500" fill="none" stroke="#8a0505" stroke-width="2.6" stroke-linecap="round" stroke-linejoin="round"/><path d="M6.800 7.300L16 16.500M16 7.300L6.800 16.500" fill="none" stroke="#e31b1b" stroke-width="1.4000000000000001" stroke-linecap="round" stroke-linejoin="round"/></svg>
<svg style="left:773.5px;top:83px" width="24" height="24" viewBox="0 0 24 24"><path d="M1.500 13.500L18.500 3.500L22 9L5 19z" fill="none" stroke="#8a0505" stroke-width="2.4" stroke-linecap="round" stroke-linejoin="round"/><path d="M1.500 13.500L18.500 3.500L22 9L5 19z" fill="none" stroke="#e31b1b" stroke-width="1.2" stroke-linecap="round" stroke-linejoin="round"/><path d="M5.500 18.500L21.500 9M5.500 18.500L21.500 22.200" fill="none" stroke="#8a0505" stroke-width="2.4" stroke-linecap="round" stroke-linejoin="round"/><path d="M5.500 18.500L21.500 9M5.500 18.500L21.500 22.200" fill="none" stroke="#e31b1b" stroke-width="1.2" stroke-linecap="round" stroke-linejoin="round"/><path d="M4 13.800l3.500 -0.300 -1.800 2.800zM18 5.500l-3.500 0.300 1.800 -2.800z" fill="#fff" stroke="#8a0505" stroke-width="0.500"/><path d="M5.500 14.500L17 7" stroke="#fff" stroke-width="0.700"/><path d="M18.500 15.500a9 9 0 0 1 0.500 7" fill="none" stroke="#8a0505" stroke-width="1"/></svg>
<svg style="left:822.5px;top:83px" width="24" height="24" viewBox="0 0 24 24"><path d="M3.500 6l14.500 14" stroke="#8a0505" stroke-width="2.600"/><path d="M3.500 6l14.500 14" stroke="#e31b1b" stroke-width="1.200"/><path d="M1.200 3.700l5.300 1.300 -4 4zM20 21.900l-5.300 -1.300 4 -4z" fill="#e31b1b" stroke="#8a0505" stroke-width="0.600"/><path d="M11.500 5.200l7 7" stroke="#1d3f78" stroke-width="2.800"/><path d="M11.500 5.200l7 7" stroke="#4f86cc" stroke-width="1.300"/><path d="M9.300 3l5.300 1.300 -4 4zM20.700 14.400l-5.300 -1.300 4 -4z" fill="#4f86cc" stroke="#1d3f78" stroke-width="0.600"/></svg>
<svg style="left:853.5px;top:83px" width="24" height="24" viewBox="0 0 24 24"><path d="M3.500 6l14.500 14" stroke="#ababab" stroke-width="2.600"/><path d="M3.500 6l14.500 14" stroke="#f2f2f2" stroke-width="1.200"/><path d="M1.200 3.700l5.300 1.300 -4 4zM20 21.900l-5.300 -1.300 4 -4z" fill="#f2f2f2" stroke="#ababab" stroke-width="0.600"/><path d="M11.500 5.200l7 7" stroke="#8a8a8a" stroke-width="2.800"/><path d="M11.500 5.200l7 7" stroke="#a9a9a9" stroke-width="1.300"/><path d="M9.300 3l5.300 1.300 -4 4zM20.700 14.400l-5.300 -1.300 4 -4z" fill="#a9a9a9" stroke="#8a8a8a" stroke-width="0.600"/></svg>
<svg style="left:896.5px;top:83px" width="24" height="24" viewBox="0 0 24 24"><path d="M3.500 3v18" fill="none" stroke="#8f8f8f" stroke-width="2.6" stroke-linecap="butt"/><path d="M3.500 3v18" fill="none" stroke="#ececec" stroke-width="1.1" stroke-linecap="butt"/><circle cx="3.5" cy="3" r="2.3" fill="#8f8f8f" stroke="#777" stroke-width="0.400"/><circle cx="3.5" cy="21" r="2.3" fill="#8f8f8f" stroke="#777" stroke-width="0.400"/><path d="M9 2l5 3.500 -5 3.500M22 2l-5 3.500 5 3.500" fill="none" stroke="#a3a3a3" stroke-width="1.5" stroke-linecap="round" stroke-linejoin="round"/><path d="M9.500 20.500L18.500 12.500M12.500 23L21.500 15" fill="none" stroke="#a3a3a3" stroke-width="2.2" stroke-linecap="round" stroke-linejoin="round"/></svg>
<svg style="left:927.5px;top:83px" width="24" height="24" viewBox="0 0 24 24"><path d="M3.200 3v18" fill="none" stroke="#8f8f8f" stroke-width="2.6" stroke-linecap="butt"/><path d="M3.200 3v18" fill="none" stroke="#ececec" stroke-width="1.1" stroke-linecap="butt"/><path d="M20.800 3v18" fill="none" stroke="#8f8f8f" stroke-width="2.6" stroke-linecap="butt"/><path d="M20.800 3v18" fill="none" stroke="#ececec" stroke-width="1.1" stroke-linecap="butt"/><circle cx="3.2" cy="3" r="2.2" fill="#8f8f8f" stroke="#777" stroke-width="0.400"/><circle cx="3.2" cy="21" r="2.2" fill="#8f8f8f" stroke="#777" stroke-width="0.400"/><circle cx="20.8" cy="3" r="2.2" fill="#8f8f8f" stroke="#777" stroke-width="0.400"/><circle cx="20.8" cy="21" r="2.2" fill="#8f8f8f" stroke="#777" stroke-width="0.400"/><path d="M7 17.500L15 9.500M9.500 19L17.500 11" fill="none" stroke="#a3a3a3" stroke-width="1.6" stroke-linecap="round" stroke-linejoin="round"/></svg>
<svg style="left:958.5px;top:83px" width="24" height="24" viewBox="0 0 24 24"><path d="M2 21.500C1 11 10 2 21.500 2.500C22.500 13 13.500 22.500 2 21.500z" fill="none" stroke="#8f8f8f" stroke-width="2.4" stroke-linecap="butt"/><path d="M2 21.500C1 11 10 2 21.500 2.500C22.500 13 13.500 22.500 2 21.500z" fill="none" stroke="#ececec" stroke-width="0.8999999999999999" stroke-linecap="butt"/><path d="M3 21L21 3" fill="none" stroke="#a3a3a3" stroke-width="2.4" stroke-linecap="round" stroke-linejoin="round"/><path d="M7.500 8L16 17" fill="none" stroke="#a3a3a3" stroke-width="2.4" stroke-linecap="round" stroke-linejoin="round"/><circle cx="7.5" cy="8" r="1.9" fill="#8f8f8f" stroke="#777" stroke-width="0.400"/><circle cx="16" cy="17" r="1.9" fill="#8f8f8f" stroke="#777" stroke-width="0.400"/><circle cx="15" cy="8.5" r="1.9" fill="#8f8f8f" stroke="#777" stroke-width="0.400"/><circle cx="8" cy="16.5" r="1.9" fill="#8f8f8f" stroke="#777" stroke-width="0.400"/></svg>
<svg style="left:989.5px;top:83px" width="24" height="24" viewBox="0 0 24 24"><path d="M2 5c2 -2.500 5 -3 9 -3h9.500M20.500 2v13c0 4 -3 6.500 -9 7" fill="none" stroke="#8f8f8f" stroke-width="2.4" stroke-linecap="butt"/><path d="M2 5c2 -2.500 5 -3 9 -3h9.500M20.500 2v13c0 4 -3 6.500 -9 7" fill="none" stroke="#ececec" stroke-width="0.8999999999999999" stroke-linecap="butt"/><path d="M7 11c0.500 -2 2.500 -3 7.500 -2.500c0 4 0 8 -5 8.500" fill="none" stroke="#8f8f8f" stroke-width="2.4" stroke-linecap="butt"/><path d="M7 11c0.500 -2 2.500 -3 7.500 -2.500c0 4 0 8 -5 8.500" fill="none" stroke="#ececec" stroke-width="0.8999999999999999" stroke-linecap="butt"/><circle cx="20.5" cy="2.5" r="2.2" fill="#8f8f8f" stroke="#777" stroke-width="0.400"/><circle cx="14.5" cy="8.5" r="2.2" fill="#8f8f8f" stroke="#777" stroke-width="0.400"/></svg>
<svg style="left:1020.5px;top:83px" width="24" height="24" viewBox="0 0 24 24"><path d="M12 3.500l6.500 3.700v7.600l-6.500 3.700 -6.500 -3.700v-7.600z" fill="none" stroke="#a3a3a3" stroke-width="2.200"/><path d="M12 3.500l6.500 3.700v7.600l-6.500 3.700 -6.500 -3.700v-7.600z" fill="none" stroke="#f0f0f0" stroke-width="0.900"/><path d="M8.500 8l5 -2.500 4.500 3.500 -0.500 6 -5.500 2 -4 -3.500z" fill="none" stroke="#9a9a9a" stroke-width="1.200"/><path d="M2.500 10.500C3 5 7 1.500 12.500 2l-1 -2 4.500 3.500 -5 2.500 0.800 -2C7.500 3.800 5 6.500 4.800 10.800z" fill="#8f8f8f"/><path d="M21.500 13.500C21 19 17 22.500 11.500 22l1 2 -4.500 -3.500 5 -2.500 -0.800 2C16.500 20.200 19 17.500 19.200 13.200z" fill="#8f8f8f"/></svg>
<svg style="left:1051.5px;top:83px" width="24" height="24" viewBox="0 0 24 24"><rect x="1.200" y="1.200" width="22" height="21.600" fill="none" stroke="#8f8f8f" stroke-width="1.500" stroke-dasharray="4.200 2.200"/><rect x="2" y="13.500" width="9" height="9" fill="#ececec" stroke="#8f8f8f" stroke-width="1.100"/><rect x="4.200" y="15.700" width="4.600" height="4.600" fill="none" stroke="#8f8f8f" stroke-width="0.900"/><path d="M12.500 11.500l5 -5 -2 -2h6.200v6.200l-2 -2 -5 5z" fill="#6f6f6f"/></svg>
<svg style="left:1082.5px;top:83px" width="24" height="24" viewBox="0 0 24 24"><path d="M4.500 3.500C1 9 1 15 4.500 20.500" fill="none" stroke="#8f8f8f" stroke-width="2.4" stroke-linecap="butt"/><path d="M4.500 3.500C1 9 1 15 4.500 20.500" fill="none" stroke="#ececec" stroke-width="0.8999999999999999" stroke-linecap="butt"/><path d="M19.500 3.500C23 9 23 15 19.500 20.500" fill="none" stroke="#8f8f8f" stroke-width="2.4" stroke-linecap="butt"/><path d="M19.500 3.500C23 9 23 15 19.500 20.500" fill="none" stroke="#ececec" stroke-width="0.8999999999999999" stroke-linecap="butt"/><path d="M10.500 6v12" fill="none" stroke="#8f8f8f" stroke-width="2.4" stroke-linecap="butt"/><path d="M10.500 6v12" fill="none" stroke="#ececec" stroke-width="0.8999999999999999" stroke-linecap="butt"/><circle cx="4.5" cy="3.5" r="2.2" fill="#8f8f8f" stroke="#777" stroke-width="0.400"/><circle cx="4.5" cy="20.5" r="2.2" fill="#8f8f8f" stroke="#777" stroke-width="0.400"/><circle cx="19.5" cy="3.5" r="2.2" fill="#8f8f8f" stroke="#777" stroke-width="0.400"/><circle cx="19.5" cy="20.5" r="2.2" fill="#8f8f8f" stroke="#777" stroke-width="0.400"/><circle cx="10.5" cy="6" r="2.2" fill="#8f8f8f" stroke="#777" stroke-width="0.400"/><circle cx="10.5" cy="18" r="2.2" fill="#8f8f8f" stroke="#777" stroke-width="0.400"/></svg>
<svg style="left:1113.5px;top:83px" width="24" height="24" viewBox="0 0 24 24"><path d="M3.500 12v9" fill="none" stroke="#8f8f8f" stroke-width="2.4" stroke-linecap="butt"/><path d="M3.500 12v9" fill="none" stroke="#ececec" stroke-width="0.8999999999999999" stroke-linecap="butt"/><path d="M11.500 7.500v9" fill="none" stroke="#8f8f8f" stroke-width="2.4" stroke-linecap="butt"/><path d="M11.500 7.500v9" fill="none" stroke="#ececec" stroke-width="0.8999999999999999" stroke-linecap="butt"/><path d="M19.500 3.500v9" fill="none" stroke="#8f8f8f" stroke-width="2.4" stroke-linecap="butt"/><path d="M19.500 3.500v9" fill="none" stroke="#ececec" stroke-width="0.8999999999999999" stroke-linecap="butt"/><circle cx="3.5" cy="11.5" r="2.2" fill="#8f8f8f" stroke="#777" stroke-width="0.400"/><circle cx="3.5" cy="21" r="2.2" fill="#8f8f8f" stroke="#777" stroke-width="0.400"/><circle cx="11.5" cy="7.5" r="2.2" fill="#8f8f8f" stroke="#777" stroke-width="0.400"/><circle cx="11.5" cy="17" r="2.2" fill="#8f8f8f" stroke="#777" stroke-width="0.400"/><circle cx="19.5" cy="3.5" r="2.2" fill="#8f8f8f" stroke="#777" stroke-width="0.400"/><circle cx="19.5" cy="13" r="2.2" fill="#8f8f8f" stroke="#777" stroke-width="0.400"/></svg>
<svg style="left:1144.5px;top:83px" width="24" height="24" viewBox="0 0 24 24"><path d="M9.500 4.500l9 -2.500 2.500 9 -9 2.500z" fill="none" stroke="#a3a3a3" stroke-width="1.100"/><path d="M11.500 2.500l9.500 1.500 -1.500 9.500 -9.500 -1.500z" fill="none" stroke="#b5b5b5" stroke-width="1.100"/><path d="M4.500 5v14.500h13" fill="none" stroke="#7f7f7f" stroke-width="2.800"/><path d="M4.500 1l3.800 5.500h-7.600zM22 19.500l-5.500 3.800v-7.600z" fill="#7f7f7f"/><circle cx="4.500" cy="19.500" r="2.500" fill="#7f7f7f"/></svg>
</body></html>
